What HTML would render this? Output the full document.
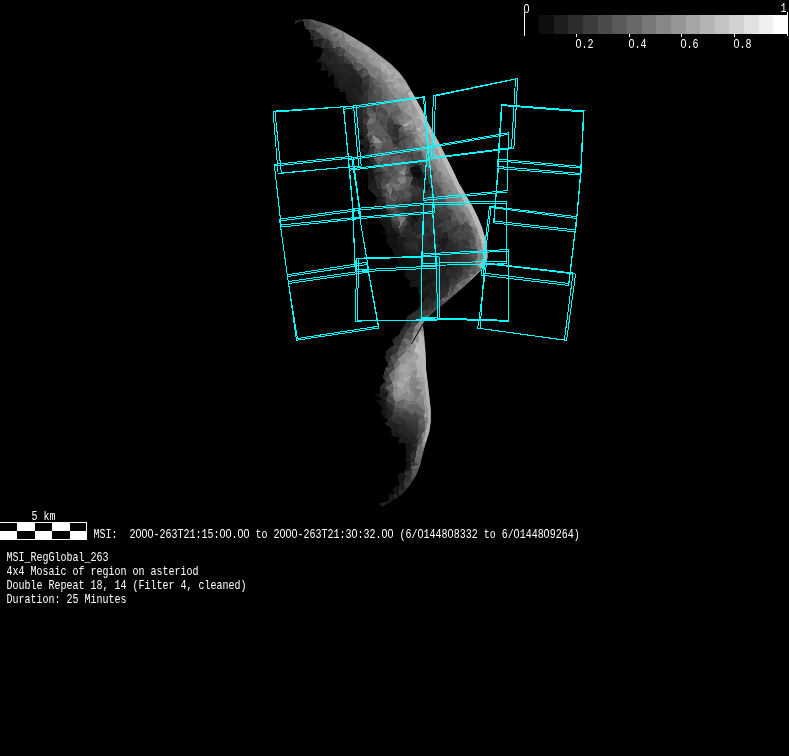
<!DOCTYPE html>
<html><head><meta charset="utf-8"><title>MSI_RegGlobal_263</title>
<style>
html,body{margin:0;padding:0;background:#000;}
body{width:789px;height:756px;overflow:hidden;position:relative;}
svg{position:absolute;left:0;top:0;}
.t{position:absolute;color:#fff;font-family:"Liberation Mono",monospace;font-size:10px;line-height:10px;white-space:pre;transform:scale(1,1.32);transform-origin:0 100%;letter-spacing:0;filter:grayscale(1) brightness(1.35);}
.z{font-family:"Liberation Sans",sans-serif;display:inline-block;width:6px;text-align:center;transform:translateX(-0.4px) scaleX(1.08);}
</style></head><body>

<svg width="789" height="756" viewBox="0 0 789 756">
<defs><clipPath id="ast"><polygon points="295.3,20.3 302.7,19.2 312.2,19.5 321.7,22.2 332.3,25.9 342.9,31.2 353.5,37.5 364.1,43.9 370.0,47.8 380.6,55.9 391.2,64.3 399.6,72.8 406.0,81.3 411.3,90.8 416.6,100.3 421.9,109.8 428.0,122.7 434.3,134.3 440.7,146.0 447.0,158.7 453.4,171.4 458.7,183.0 466.0,195.6 472.3,206.2 477.6,216.7 481.9,227.3 485.0,237.9 487.1,248.5 487.6,257.0 486.5,262.0 482.7,268.8 475.3,276.2 465.0,285.7 455.2,294.2 446.7,301.6 436.2,310.0 425.6,319.6 422.8,324.8 423.7,330.0 424.7,342.3 425.8,358.2 426.1,370.0 427.7,382.7 429.3,396.5 430.8,410.2 430.8,420.8 429.3,431.4 426.1,442.0 422.5,455.0 420.3,465.0 416.2,475.0 410.2,485.0 401.5,495.0 385.0,505.0 383.0,507.0 376.3,503.0 386.6,495.0 392.5,485.0 395.0,475.0 399.4,465.0 401.6,455.0 401.2,445.0 388.0,435.0 382.3,425.0 376.9,415.0 374.2,405.0 373.5,395.0 378.5,385.0 380.3,375.0 379.7,365.0 381.5,355.0 388.5,345.0 392.5,335.0 398.6,325.0 405.7,315.0 419.1,305.0 416.0,295.0 408.5,285.0 401.0,275.0 394.5,265.0 389.6,255.0 383.7,245.0 380.6,235.0 378.3,225.0 375.8,215.0 371.5,205.0 368.3,195.0 363.4,185.0 363.5,180.0 360.6,170.0 359.1,160.0 356.8,150.0 355.1,140.0 353.2,130.0 351.5,120.0 346.8,110.0 344.8,100.0 330.3,90.0 328.0,80.0 319.9,70.0 312.4,60.0 316.3,50.0 307.3,40.0 301.7,30.0 291.1,20.0 293.0,19.0"/></clipPath></defs>
<g clip-path="url(#ast)" shape-rendering="crispEdges">
<polygon points="320.6,11.6 320.5,17.8 313.2,14.8" fill="#5e5e5e"/>
<polygon points="294.7,15.8 301.4,14.2 303.1,20.3" fill="#232323"/>
<polygon points="294.7,15.8 303.1,20.3 294.7,24.2" fill="#252525"/>
<polygon points="301.4,14.2 306.9,17.3 303.1,20.3" fill="#3d3d3d"/>
<polygon points="306.9,17.3 309.2,19.7 303.1,20.3" fill="#494949"/>
<polygon points="306.9,17.3 313.2,14.8 309.2,19.7" fill="#535353"/>
<polygon points="313.2,14.8 315.1,24.3 309.2,19.7" fill="#5b5b5b"/>
<polygon points="313.2,14.8 320.5,17.8 322.7,22.9" fill="#525252"/>
<polygon points="313.2,14.8 322.7,22.9 315.1,24.3" fill="#575757"/>
<polygon points="303.1,20.3 309.2,19.7 305.3,28.7" fill="#383838"/>
<polygon points="309.2,19.7 309.1,30.1 305.3,28.7" fill="#343434"/>
<polygon points="309.2,19.7 315.1,24.3 309.1,30.1" fill="#444444"/>
<polygon points="315.1,24.3 314.7,29.8 309.1,30.1" fill="#444444"/>
<polygon points="315.1,24.3 322.7,22.9 322.6,26.6" fill="#575757"/>
<polygon points="315.1,24.3 322.6,26.6 314.7,29.8" fill="#494949"/>
<polygon points="322.7,22.9 325.9,21.4 322.6,26.6" fill="#6b6b6b"/>
<polygon points="325.9,21.4 325.8,27.0 322.6,26.6" fill="#676767"/>
<polygon points="325.9,21.4 331.4,23.3 325.8,27.0" fill="#707070"/>
<polygon points="331.4,23.3 331.8,28.4 325.8,27.0" fill="#6e6e6e"/>
<polygon points="331.4,23.3 339.2,23.3 331.8,28.4" fill="#6b6b6b"/>
<polygon points="339.2,23.3 337.8,27.6 331.8,28.4" fill="#777777"/>
<polygon points="309.1,30.1 314.7,29.8 313.7,36.2" fill="#292929"/>
<polygon points="309.1,30.1 313.7,36.2 310.8,36.2" fill="#2b2b2b"/>
<polygon points="314.7,29.8 322.6,26.6 320.5,33.9" fill="#616161"/>
<polygon points="314.7,29.8 320.5,33.9 313.7,36.2" fill="#323232"/>
<polygon points="322.6,26.6 325.8,27.0 320.5,33.9" fill="#5c5c5c"/>
<polygon points="325.8,27.0 329.4,35.6 320.5,33.9" fill="#5e5e5e"/>
<polygon points="325.8,27.0 331.8,28.4 329.4,35.6" fill="#686868"/>
<polygon points="331.8,28.4 331.4,33.7 329.4,35.6" fill="#707070"/>
<polygon points="331.8,28.4 337.8,27.6 331.4,33.7" fill="#7f7f7f"/>
<polygon points="337.8,27.6 339.1,33.2 331.4,33.7" fill="#878787"/>
<polygon points="337.8,27.6 343.2,30.0 343.5,33.1" fill="#8d8d8d"/>
<polygon points="337.8,27.6 343.5,33.1 339.1,33.2" fill="#818181"/>
<polygon points="343.2,30.0 350.3,27.8 343.5,33.1" fill="#868686"/>
<polygon points="350.3,27.8 352.1,31.7 343.5,33.1" fill="#8f8f8f"/>
<polygon points="310.8,36.2 313.7,36.2 310.1,40.2" fill="#1d1d1d"/>
<polygon points="313.7,36.2 313.5,39.9 310.1,40.2" fill="#1c1c1c"/>
<polygon points="313.7,36.2 320.5,33.9 313.5,39.9" fill="#2f2f2f"/>
<polygon points="320.5,33.9 323.1,38.1 313.5,39.9" fill="#373737"/>
<polygon points="320.5,33.9 329.4,35.6 328.5,39.7" fill="#585858"/>
<polygon points="320.5,33.9 328.5,39.7 323.1,38.1" fill="#4b4b4b"/>
<polygon points="329.4,35.6 331.4,33.7 333.0,41.6" fill="#6a6a6a"/>
<polygon points="329.4,35.6 333.0,41.6 328.5,39.7" fill="#5d5d5d"/>
<polygon points="331.4,33.7 339.1,33.2 333.0,41.6" fill="#676767"/>
<polygon points="339.1,33.2 338.5,40.0 333.0,41.6" fill="#777777"/>
<polygon points="339.1,33.2 343.5,33.1 338.5,40.0" fill="#888888"/>
<polygon points="343.5,33.1 345.9,42.3 338.5,40.0" fill="#787878"/>
<polygon points="343.5,33.1 352.1,31.7 345.9,42.3" fill="#909090"/>
<polygon points="352.1,31.7 350.2,41.6 345.9,42.3" fill="#959595"/>
<polygon points="352.1,31.7 357.3,33.7 358.0,40.7" fill="#909090"/>
<polygon points="352.1,31.7 358.0,40.7 350.2,41.6" fill="#9b9b9b"/>
<polygon points="357.3,33.7 362.5,39.3 358.0,40.7" fill="#9c9c9c"/>
<polygon points="313.5,39.9 323.1,38.1 313.3,46.1" fill="#1d1d1d"/>
<polygon points="323.1,38.1 321.0,47.6 313.3,46.1" fill="#1f1f1f"/>
<polygon points="323.1,38.1 328.5,39.7 321.0,47.6" fill="#363636"/>
<polygon points="328.5,39.7 328.5,47.6 321.0,47.6" fill="#2c2c2c"/>
<polygon points="328.5,39.7 333.0,41.6 333.4,47.9" fill="#494949"/>
<polygon points="328.5,39.7 333.4,47.9 328.5,47.6" fill="#363636"/>
<polygon points="333.0,41.6 338.5,40.0 333.4,47.9" fill="#626262"/>
<polygon points="338.5,40.0 339.9,46.9 333.4,47.9" fill="#5f5f5f"/>
<polygon points="338.5,40.0 345.9,42.3 339.9,46.9" fill="#717171"/>
<polygon points="345.9,42.3 343.7,43.7 339.9,46.9" fill="#727272"/>
<polygon points="345.9,42.3 350.2,41.6 343.7,43.7" fill="#808080"/>
<polygon points="350.2,41.6 349.2,45.3 343.7,43.7" fill="#7f7f7f"/>
<polygon points="350.2,41.6 358.0,40.7 349.2,45.3" fill="#909090"/>
<polygon points="358.0,40.7 355.1,47.6 349.2,45.3" fill="#919191"/>
<polygon points="358.0,40.7 362.5,39.3 355.1,47.6" fill="#909090"/>
<polygon points="362.5,39.3 363.3,46.6 355.1,47.6" fill="#989898"/>
<polygon points="362.5,39.3 366.9,38.2 369.6,46.9" fill="#979797"/>
<polygon points="362.5,39.3 369.6,46.9 363.3,46.6" fill="#9b9b9b"/>
<polygon points="366.9,38.2 374.9,43.6 369.6,46.9" fill="#969696"/>
<polygon points="321.0,47.6 328.5,47.6 323.2,50.2" fill="#1e1e1e"/>
<polygon points="328.5,47.6 328.5,52.0 323.2,50.2" fill="#202020"/>
<polygon points="328.5,47.6 333.4,47.9 334.9,53.0" fill="#2f2f2f"/>
<polygon points="328.5,47.6 334.9,53.0 328.5,52.0" fill="#2c2c2c"/>
<polygon points="333.4,47.9 339.9,46.9 334.9,53.0" fill="#3a3a3a"/>
<polygon points="339.9,46.9 337.7,53.9 334.9,53.0" fill="#343434"/>
<polygon points="339.9,46.9 343.7,43.7 344.9,49.7" fill="#717171"/>
<polygon points="339.9,46.9 344.9,49.7 337.7,53.9" fill="#494949"/>
<polygon points="343.7,43.7 349.2,45.3 344.9,49.7" fill="#737373"/>
<polygon points="349.2,45.3 348.6,52.0 344.9,49.7" fill="#6f6f6f"/>
<polygon points="349.2,45.3 355.1,47.6 348.6,52.0" fill="#7b7b7b"/>
<polygon points="355.1,47.6 356.8,51.0 348.6,52.0" fill="#767676"/>
<polygon points="355.1,47.6 363.3,46.6 361.3,51.3" fill="#919191"/>
<polygon points="355.1,47.6 361.3,51.3 356.8,51.0" fill="#818181"/>
<polygon points="363.3,46.6 369.6,46.9 368.1,53.6" fill="#a5a5a5"/>
<polygon points="363.3,46.6 368.1,53.6 361.3,51.3" fill="#9b9b9b"/>
<polygon points="369.6,46.9 374.9,43.6 372.6,53.2" fill="#959595"/>
<polygon points="369.6,46.9 372.6,53.2 368.1,53.6" fill="#999999"/>
<polygon points="374.9,43.6 382.4,47.2 372.6,53.2" fill="#979797"/>
<polygon points="382.4,47.2 382.6,50.2 372.6,53.2" fill="#9a9a9a"/>
<polygon points="323.2,50.2 328.5,52.0 329.0,60.4" fill="#1f1f1f"/>
<polygon points="323.2,50.2 329.0,60.4 321.0,56.7" fill="#242424"/>
<polygon points="328.5,52.0 334.9,53.0 332.8,56.3" fill="#212121"/>
<polygon points="328.5,52.0 332.8,56.3 329.0,60.4" fill="#202020"/>
<polygon points="334.9,53.0 337.7,53.9 337.5,56.0" fill="#313131"/>
<polygon points="334.9,53.0 337.5,56.0 332.8,56.3" fill="#282828"/>
<polygon points="337.7,53.9 344.9,49.7 337.5,56.0" fill="#3b3b3b"/>
<polygon points="344.9,49.7 344.2,56.0 337.5,56.0" fill="#444444"/>
<polygon points="344.9,49.7 348.6,52.0 349.7,56.8" fill="#676767"/>
<polygon points="344.9,49.7 349.7,56.8 344.2,56.0" fill="#5c5c5c"/>
<polygon points="348.6,52.0 356.8,51.0 357.3,59.9" fill="#7b7b7b"/>
<polygon points="348.6,52.0 357.3,59.9 349.7,56.8" fill="#616161"/>
<polygon points="356.8,51.0 361.3,51.3 357.3,59.9" fill="#7e7e7e"/>
<polygon points="361.3,51.3 364.2,57.6 357.3,59.9" fill="#858585"/>
<polygon points="361.3,51.3 368.1,53.6 368.6,58.1" fill="#8d8d8d"/>
<polygon points="361.3,51.3 368.6,58.1 364.2,57.6" fill="#858585"/>
<polygon points="368.1,53.6 372.6,53.2 368.6,58.1" fill="#989898"/>
<polygon points="372.6,53.2 374.4,57.2 368.6,58.1" fill="#a2a2a2"/>
<polygon points="372.6,53.2 382.6,50.2 378.9,56.9" fill="#a0a0a0"/>
<polygon points="372.6,53.2 378.9,56.9 374.4,57.2" fill="#9c9c9c"/>
<polygon points="382.6,50.2 389.2,56.2 378.9,56.9" fill="#9d9d9d"/>
<polygon points="321.0,56.7 321.5,61.7 314.5,62.7" fill="#171717"/>
<polygon points="321.0,56.7 329.0,60.4 321.5,61.7" fill="#202020"/>
<polygon points="329.0,60.4 326.0,63.8 321.5,61.7" fill="#1c1c1c"/>
<polygon points="329.0,60.4 332.8,56.3 326.0,63.8" fill="#292929"/>
<polygon points="332.8,56.3 335.2,64.7 326.0,63.8" fill="#262626"/>
<polygon points="332.8,56.3 337.5,56.0 340.8,63.9" fill="#282828"/>
<polygon points="332.8,56.3 340.8,63.9 335.2,64.7" fill="#252525"/>
<polygon points="337.5,56.0 344.2,56.0 340.8,63.9" fill="#2f2f2f"/>
<polygon points="344.2,56.0 343.7,62.8 340.8,63.9" fill="#303030"/>
<polygon points="344.2,56.0 349.7,56.8 353.2,65.0" fill="#555555"/>
<polygon points="344.2,56.0 353.2,65.0 343.7,62.8" fill="#3d3d3d"/>
<polygon points="349.7,56.8 357.3,59.9 356.1,61.7" fill="#5d5d5d"/>
<polygon points="349.7,56.8 356.1,61.7 353.2,65.0" fill="#5d5d5d"/>
<polygon points="357.3,59.9 364.2,57.6 356.1,61.7" fill="#757575"/>
<polygon points="364.2,57.6 363.0,64.8 356.1,61.7" fill="#777777"/>
<polygon points="364.2,57.6 368.6,58.1 368.6,62.8" fill="#8a8a8a"/>
<polygon points="364.2,57.6 368.6,62.8 363.0,64.8" fill="#797979"/>
<polygon points="368.6,58.1 374.4,57.2 368.6,62.8" fill="#8c8c8c"/>
<polygon points="374.4,57.2 375.8,66.0 368.6,62.8" fill="#969696"/>
<polygon points="374.4,57.2 378.9,56.9 379.7,61.8" fill="#9e9e9e"/>
<polygon points="374.4,57.2 379.7,61.8 375.8,66.0" fill="#9e9e9e"/>
<polygon points="378.9,56.9 389.2,56.2 379.7,61.8" fill="#9f9f9f"/>
<polygon points="389.2,56.2 386.2,63.6 379.7,61.8" fill="#9f9f9f"/>
<polygon points="389.2,56.2 393.0,58.6 386.2,63.6" fill="#ababab"/>
<polygon points="393.0,58.6 393.9,62.6 386.2,63.6" fill="#a8a8a8"/>
<polygon points="393.0,58.6 400.4,65.1 393.9,62.6" fill="#b1b1b1"/>
<polygon points="321.5,61.7 326.0,63.8 328.5,69.7" fill="#161616"/>
<polygon points="321.5,61.7 328.5,69.7 320.3,71.5" fill="#161616"/>
<polygon points="326.0,63.8 335.2,64.7 330.8,69.9" fill="#1f1f1f"/>
<polygon points="326.0,63.8 330.8,69.9 328.5,69.7" fill="#171717"/>
<polygon points="335.2,64.7 340.8,63.9 338.4,72.0" fill="#232323"/>
<polygon points="335.2,64.7 338.4,72.0 330.8,69.9" fill="#232323"/>
<polygon points="340.8,63.9 343.7,62.8 338.4,72.0" fill="#252525"/>
<polygon points="343.7,62.8 343.5,69.3 338.4,72.0" fill="#242424"/>
<polygon points="343.7,62.8 353.2,65.0 343.5,69.3" fill="#232323"/>
<polygon points="353.2,65.0 352.9,67.7 343.5,69.3" fill="#252525"/>
<polygon points="353.2,65.0 356.1,61.7 352.9,67.7" fill="#4e4e4e"/>
<polygon points="356.1,61.7 356.6,71.5 352.9,67.7" fill="#494949"/>
<polygon points="356.1,61.7 363.0,64.8 356.6,71.5" fill="#5a5a5a"/>
<polygon points="363.0,64.8 364.3,67.8 356.6,71.5" fill="#616161"/>
<polygon points="363.0,64.8 368.6,62.8 364.3,67.8" fill="#727272"/>
<polygon points="368.6,62.8 366.8,67.9 364.3,67.8" fill="#767676"/>
<polygon points="368.6,62.8 375.8,66.0 377.0,68.8" fill="#8b8b8b"/>
<polygon points="368.6,62.8 377.0,68.8 366.8,67.9" fill="#7d7d7d"/>
<polygon points="375.8,66.0 379.7,61.8 382.2,71.9" fill="#9b9b9b"/>
<polygon points="375.8,66.0 382.2,71.9 377.0,68.8" fill="#747474"/>
<polygon points="379.7,61.8 386.2,63.6 382.2,71.9" fill="#acacac"/>
<polygon points="386.2,63.6 386.2,68.9 382.2,71.9" fill="#adadad"/>
<polygon points="386.2,63.6 393.9,62.6 386.2,68.9" fill="#a3a3a3"/>
<polygon points="393.9,62.6 395.2,70.6 386.2,68.9" fill="#9f9f9f"/>
<polygon points="393.9,62.6 400.4,65.1 395.2,70.6" fill="#acacac"/>
<polygon points="400.4,65.1 397.9,71.0 395.2,70.6" fill="#a4a4a4"/>
<polygon points="400.4,65.1 404.1,68.9 397.9,71.0" fill="#9f9f9f"/>
<polygon points="328.5,69.7 330.8,69.9 328.2,77.7" fill="#151515"/>
<polygon points="330.8,69.9 333.8,74.2 328.2,77.7" fill="#151515"/>
<polygon points="330.8,69.9 338.4,72.0 333.8,74.2" fill="#1d1d1d"/>
<polygon points="338.4,72.0 340.6,75.0 333.8,74.2" fill="#212121"/>
<polygon points="338.4,72.0 343.5,69.3 345.3,75.4" fill="#252525"/>
<polygon points="338.4,72.0 345.3,75.4 340.6,75.0" fill="#202020"/>
<polygon points="343.5,69.3 352.9,67.7 352.1,74.6" fill="#242424"/>
<polygon points="343.5,69.3 352.1,74.6 345.3,75.4" fill="#232323"/>
<polygon points="352.9,67.7 356.6,71.5 352.1,74.6" fill="#242424"/>
<polygon points="356.6,71.5 355.8,74.8 352.1,74.6" fill="#242424"/>
<polygon points="356.6,71.5 364.3,67.8 361.3,77.8" fill="#3d3d3d"/>
<polygon points="356.6,71.5 361.3,77.8 355.8,74.8" fill="#242424"/>
<polygon points="364.3,67.8 366.8,67.9 361.3,77.8" fill="#565656"/>
<polygon points="366.8,67.9 369.4,75.2 361.3,77.8" fill="#555555"/>
<polygon points="366.8,67.9 377.0,68.8 369.4,75.2" fill="#797979"/>
<polygon points="377.0,68.8 374.5,78.4 369.4,75.2" fill="#7a7a7a"/>
<polygon points="377.0,68.8 382.2,71.9 374.5,78.4" fill="#848484"/>
<polygon points="382.2,71.9 381.0,74.7 374.5,78.4" fill="#7d7d7d"/>
<polygon points="382.2,71.9 386.2,68.9 388.5,76.7" fill="#9c9c9c"/>
<polygon points="382.2,71.9 388.5,76.7 381.0,74.7" fill="#8b8b8b"/>
<polygon points="386.2,68.9 395.2,70.6 388.5,76.7" fill="#ababab"/>
<polygon points="395.2,70.6 395.4,74.1 388.5,76.7" fill="#a1a1a1"/>
<polygon points="395.2,70.6 397.9,71.0 395.4,74.1" fill="#a6a6a6"/>
<polygon points="397.9,71.0 398.9,77.5 395.4,74.1" fill="#adadad"/>
<polygon points="397.9,71.0 404.1,68.9 406.6,78.0" fill="#b0b0b0"/>
<polygon points="397.9,71.0 406.6,78.0 398.9,77.5" fill="#aaaaaa"/>
<polygon points="404.1,68.9 408.6,71.2 408.8,75.0" fill="#a8a8a8"/>
<polygon points="404.1,68.9 408.8,75.0 406.6,78.0" fill="#adadad"/>
<polygon points="333.8,74.2 340.6,75.0 334.7,84.4" fill="#1a1a1a"/>
<polygon points="340.6,75.0 338.3,80.5 334.7,84.4" fill="#1a1a1a"/>
<polygon points="340.6,75.0 345.3,75.4 346.1,80.6" fill="#212121"/>
<polygon points="340.6,75.0 346.1,80.6 338.3,80.5" fill="#1f1f1f"/>
<polygon points="345.3,75.4 352.1,74.6 346.1,80.6" fill="#232323"/>
<polygon points="352.1,74.6 348.6,83.9 346.1,80.6" fill="#212121"/>
<polygon points="352.1,74.6 355.8,74.8 348.6,83.9" fill="#1e1e1e"/>
<polygon points="355.8,74.8 356.6,83.5 348.6,83.9" fill="#1e1e1e"/>
<polygon points="355.8,74.8 361.3,77.8 362.5,83.8" fill="#1e1e1e"/>
<polygon points="355.8,74.8 362.5,83.8 356.6,83.5" fill="#202020"/>
<polygon points="361.3,77.8 369.4,75.2 362.5,83.8" fill="#353535"/>
<polygon points="369.4,75.2 368.8,80.4 362.5,83.8" fill="#3f3f3f"/>
<polygon points="369.4,75.2 374.5,78.4 372.7,82.2" fill="#575757"/>
<polygon points="369.4,75.2 372.7,82.2 368.8,80.4" fill="#484848"/>
<polygon points="374.5,78.4 381.0,74.7 381.7,84.0" fill="#717171"/>
<polygon points="374.5,78.4 381.7,84.0 372.7,82.2" fill="#656565"/>
<polygon points="381.0,74.7 388.5,76.7 385.0,82.6" fill="#8b8b8b"/>
<polygon points="381.0,74.7 385.0,82.6 381.7,84.0" fill="#7c7c7c"/>
<polygon points="388.5,76.7 395.4,74.1 385.0,82.6" fill="#999999"/>
<polygon points="395.4,74.1 392.4,82.0 385.0,82.6" fill="#a2a2a2"/>
<polygon points="395.4,74.1 398.9,77.5 392.4,82.0" fill="#a9a9a9"/>
<polygon points="398.9,77.5 397.3,81.0 392.4,82.0" fill="#a3a3a3"/>
<polygon points="398.9,77.5 406.6,78.0 405.1,84.0" fill="#9f9f9f"/>
<polygon points="398.9,77.5 405.1,84.0 397.3,81.0" fill="#989898"/>
<polygon points="406.6,78.0 408.8,75.0 409.1,82.0" fill="#a7a7a7"/>
<polygon points="406.6,78.0 409.1,82.0 405.1,84.0" fill="#9c9c9c"/>
<polygon points="408.8,75.0 415.2,74.5 409.1,82.0" fill="#aeaeae"/>
<polygon points="334.7,84.4 338.3,80.5 340.3,89.3" fill="#151515"/>
<polygon points="334.7,84.4 340.3,89.3 332.9,86.7" fill="#141414"/>
<polygon points="338.3,80.5 346.1,80.6 340.3,89.3" fill="#212121"/>
<polygon points="346.1,80.6 344.8,86.5 340.3,89.3" fill="#1d1d1d"/>
<polygon points="346.1,80.6 348.6,83.9 350.9,86.1" fill="#212121"/>
<polygon points="346.1,80.6 350.9,86.1 344.8,86.5" fill="#1f1f1f"/>
<polygon points="348.6,83.9 356.6,83.5 350.9,86.1" fill="#1d1d1d"/>
<polygon points="356.6,83.5 355.2,87.7 350.9,86.1" fill="#1c1c1c"/>
<polygon points="356.6,83.5 362.5,83.8 355.2,87.7" fill="#1d1d1d"/>
<polygon points="362.5,83.8 361.0,87.7 355.2,87.7" fill="#1f1f1f"/>
<polygon points="362.5,83.8 368.8,80.4 369.0,85.8" fill="#363636"/>
<polygon points="362.5,83.8 369.0,85.8 361.0,87.7" fill="#2d2d2d"/>
<polygon points="368.8,80.4 372.7,82.2 369.0,85.8" fill="#4a4a4a"/>
<polygon points="372.7,82.2 375.7,86.0 369.0,85.8" fill="#4c4c4c"/>
<polygon points="372.7,82.2 381.7,84.0 375.7,86.0" fill="#5c5c5c"/>
<polygon points="381.7,84.0 382.1,89.3 375.7,86.0" fill="#6d6d6d"/>
<polygon points="381.7,84.0 385.0,82.6 382.1,89.3" fill="#737373"/>
<polygon points="385.0,82.6 387.1,85.9 382.1,89.3" fill="#787878"/>
<polygon points="385.0,82.6 392.4,82.0 387.1,85.9" fill="#848484"/>
<polygon points="392.4,82.0 393.0,87.4 387.1,85.9" fill="#949494"/>
<polygon points="392.4,82.0 397.3,81.0 393.0,87.4" fill="#969696"/>
<polygon points="397.3,81.0 401.2,86.3 393.0,87.4" fill="#ababab"/>
<polygon points="397.3,81.0 405.1,84.0 406.7,90.4" fill="#a6a6a6"/>
<polygon points="397.3,81.0 406.7,90.4 401.2,86.3" fill="#9e9e9e"/>
<polygon points="405.1,84.0 409.1,82.0 412.1,89.5" fill="#989898"/>
<polygon points="405.1,84.0 412.1,89.5 406.7,90.4" fill="#acacac"/>
<polygon points="409.1,82.0 418.5,84.2 412.1,89.5" fill="#a0a0a0"/>
<polygon points="418.5,84.2 415.5,90.3 412.1,89.5" fill="#a7a7a7"/>
<polygon points="340.3,89.3 344.8,86.5 346.2,91.8" fill="#1b1b1b"/>
<polygon points="340.3,89.3 346.2,91.8 338.7,92.4" fill="#161616"/>
<polygon points="344.8,86.5 350.9,86.1 346.2,91.8" fill="#1c1c1c"/>
<polygon points="350.9,86.1 352.5,92.8 346.2,91.8" fill="#1c1c1c"/>
<polygon points="350.9,86.1 355.2,87.7 352.5,92.8" fill="#1f1f1f"/>
<polygon points="355.2,87.7 357.7,96.3 352.5,92.8" fill="#212121"/>
<polygon points="355.2,87.7 361.0,87.7 363.4,94.8" fill="#1b1b1b"/>
<polygon points="355.2,87.7 363.4,94.8 357.7,96.3" fill="#222222"/>
<polygon points="361.0,87.7 369.0,85.8 363.4,94.8" fill="#2a2a2a"/>
<polygon points="369.0,85.8 368.1,91.6 363.4,94.8" fill="#303030"/>
<polygon points="369.0,85.8 375.7,86.0 372.8,92.3" fill="#484848"/>
<polygon points="369.0,85.8 372.8,92.3 368.1,91.6" fill="#424242"/>
<polygon points="375.7,86.0 382.1,89.3 372.8,92.3" fill="#595959"/>
<polygon points="382.1,89.3 381.6,93.7 372.8,92.3" fill="#5a5a5a"/>
<polygon points="382.1,89.3 387.1,85.9 381.6,93.7" fill="#6d6d6d"/>
<polygon points="387.1,85.9 387.1,95.9 381.6,93.7" fill="#6e6e6e"/>
<polygon points="387.1,85.9 393.0,87.4 391.2,92.7" fill="#929292"/>
<polygon points="387.1,85.9 391.2,92.7 387.1,95.9" fill="#797979"/>
<polygon points="393.0,87.4 401.2,86.3 399.7,91.7" fill="#9f9f9f"/>
<polygon points="393.0,87.4 399.7,91.7 391.2,92.7" fill="#8b8b8b"/>
<polygon points="401.2,86.3 406.7,90.4 402.6,93.3" fill="#a4a4a4"/>
<polygon points="401.2,86.3 402.6,93.3 399.7,91.7" fill="#9b9b9b"/>
<polygon points="406.7,90.4 412.1,89.5 402.6,93.3" fill="#989898"/>
<polygon points="412.1,89.5 409.1,93.3 402.6,93.3" fill="#959595"/>
<polygon points="412.1,89.5 415.5,90.3 409.1,93.3" fill="#9e9e9e"/>
<polygon points="415.5,90.3 415.7,94.4 409.1,93.3" fill="#a7a7a7"/>
<polygon points="415.5,90.3 423.4,92.6 415.7,94.4" fill="#a3a3a3"/>
<polygon points="346.2,91.8 352.5,92.8 352.2,99.8" fill="#1c1c1c"/>
<polygon points="346.2,91.8 352.2,99.8 346.2,99.8" fill="#191919"/>
<polygon points="352.5,92.8 357.7,96.3 352.2,99.8" fill="#1e1e1e"/>
<polygon points="357.7,96.3 355.7,98.1 352.2,99.8" fill="#1b1b1b"/>
<polygon points="357.7,96.3 363.4,94.8 361.7,97.8" fill="#282828"/>
<polygon points="357.7,96.3 361.7,97.8 355.7,98.1" fill="#212121"/>
<polygon points="363.4,94.8 368.1,91.6 368.2,101.2" fill="#313131"/>
<polygon points="363.4,94.8 368.2,101.2 361.7,97.8" fill="#2d2d2d"/>
<polygon points="368.1,91.6 372.8,92.3 368.2,101.2" fill="#414141"/>
<polygon points="372.8,92.3 375.9,101.7 368.2,101.2" fill="#494949"/>
<polygon points="372.8,92.3 381.6,93.7 382.0,98.9" fill="#545454"/>
<polygon points="372.8,92.3 382.0,98.9 375.9,101.7" fill="#4e4e4e"/>
<polygon points="381.6,93.7 387.1,95.9 387.3,99.7" fill="#646464"/>
<polygon points="381.6,93.7 387.3,99.7 382.0,98.9" fill="#666666"/>
<polygon points="387.1,95.9 391.2,92.7 387.3,99.7" fill="#6d6d6d"/>
<polygon points="391.2,92.7 394.4,100.1 387.3,99.7" fill="#7c7c7c"/>
<polygon points="391.2,92.7 399.7,91.7 397.9,100.7" fill="#919191"/>
<polygon points="391.2,92.7 397.9,100.7 394.4,100.1" fill="#797979"/>
<polygon points="399.7,91.7 402.6,93.3 397.9,100.7" fill="#939393"/>
<polygon points="402.6,93.3 407.2,98.6 397.9,100.7" fill="#8d8d8d"/>
<polygon points="402.6,93.3 409.1,93.3 407.2,98.6" fill="#919191"/>
<polygon points="409.1,93.3 412.8,97.7 407.2,98.6" fill="#969696"/>
<polygon points="409.1,93.3 415.7,94.4 415.8,98.7" fill="#a5a5a5"/>
<polygon points="409.1,93.3 415.8,98.7 412.8,97.7" fill="#9c9c9c"/>
<polygon points="415.7,94.4 423.4,92.6 424.2,102.1" fill="#989898"/>
<polygon points="415.7,94.4 424.2,102.1 415.8,98.7" fill="#9f9f9f"/>
<polygon points="346.2,99.8 352.2,99.8 352.7,107.5" fill="#181818"/>
<polygon points="352.2,99.8 355.7,98.1 352.7,107.5" fill="#1b1b1b"/>
<polygon points="355.7,98.1 357.6,107.6 352.7,107.5" fill="#1d1d1d"/>
<polygon points="355.7,98.1 361.7,97.8 363.6,105.0" fill="#272727"/>
<polygon points="355.7,98.1 363.6,105.0 357.6,107.6" fill="#1f1f1f"/>
<polygon points="361.7,97.8 368.2,101.2 363.6,105.0" fill="#2f2f2f"/>
<polygon points="368.2,101.2 367.1,104.1 363.6,105.0" fill="#353535"/>
<polygon points="368.2,101.2 375.9,101.7 367.1,104.1" fill="#3d3d3d"/>
<polygon points="375.9,101.7 376.2,104.6 367.1,104.1" fill="#434343"/>
<polygon points="375.9,101.7 382.0,98.9 380.1,105.6" fill="#5d5d5d"/>
<polygon points="375.9,101.7 380.1,105.6 376.2,104.6" fill="#585858"/>
<polygon points="382.0,98.9 387.3,99.7 380.1,105.6" fill="#5d5d5d"/>
<polygon points="387.3,99.7 384.7,104.8 380.1,105.6" fill="#686868"/>
<polygon points="387.3,99.7 394.4,100.1 392.0,107.0" fill="#6a6a6a"/>
<polygon points="387.3,99.7 392.0,107.0 384.7,104.8" fill="#606060"/>
<polygon points="394.4,100.1 397.9,100.7 392.0,107.0" fill="#727272"/>
<polygon points="397.9,100.7 398.4,105.1 392.0,107.0" fill="#777777"/>
<polygon points="397.9,100.7 407.2,98.6 398.4,105.1" fill="#888888"/>
<polygon points="407.2,98.6 407.2,106.0 398.4,105.1" fill="#979797"/>
<polygon points="407.2,98.6 412.8,97.7 407.2,106.0" fill="#a6a6a6"/>
<polygon points="412.8,97.7 412.7,106.6 407.2,106.0" fill="#adadad"/>
<polygon points="412.8,97.7 415.8,98.7 414.7,105.6" fill="#a4a4a4"/>
<polygon points="412.8,97.7 414.7,105.6 412.7,106.6" fill="#9f9f9f"/>
<polygon points="415.8,98.7 424.2,102.1 422.7,107.3" fill="#a1a1a1"/>
<polygon points="415.8,98.7 422.7,107.3 414.7,105.6" fill="#b4b4b4"/>
<polygon points="424.2,102.1 428.3,107.0 422.7,107.3" fill="#a9a9a9"/>
<polygon points="352.7,107.5 357.6,107.6 351.2,113.2" fill="#222222"/>
<polygon points="357.6,107.6 358.2,112.7 351.2,113.2" fill="#1d1d1d"/>
<polygon points="357.6,107.6 363.6,105.0 358.2,112.7" fill="#272727"/>
<polygon points="363.6,105.0 362.3,111.2 358.2,112.7" fill="#292929"/>
<polygon points="363.6,105.0 367.1,104.1 367.3,113.6" fill="#3e3e3e"/>
<polygon points="363.6,105.0 367.3,113.6 362.3,111.2" fill="#363636"/>
<polygon points="367.1,104.1 376.2,104.6 375.8,113.2" fill="#404040"/>
<polygon points="367.1,104.1 375.8,113.2 367.3,113.6" fill="#555555"/>
<polygon points="376.2,104.6 380.1,105.6 375.8,113.2" fill="#595959"/>
<polygon points="380.1,105.6 379.4,111.7 375.8,113.2" fill="#444444"/>
<polygon points="380.1,105.6 384.7,104.8 388.3,112.4" fill="#646464"/>
<polygon points="380.1,105.6 388.3,112.4 379.4,111.7" fill="#4d4d4d"/>
<polygon points="384.7,104.8 392.0,107.0 391.2,111.8" fill="#696969"/>
<polygon points="384.7,104.8 391.2,111.8 388.3,112.4" fill="#6b6b6b"/>
<polygon points="392.0,107.0 398.4,105.1 391.2,111.8" fill="#676767"/>
<polygon points="398.4,105.1 400.8,110.7 391.2,111.8" fill="#666666"/>
<polygon points="398.4,105.1 407.2,106.0 400.8,110.7" fill="#8c8c8c"/>
<polygon points="407.2,106.0 403.5,111.0 400.8,110.7" fill="#7b7b7b"/>
<polygon points="407.2,106.0 412.7,106.6 412.0,113.6" fill="#b7b7b7"/>
<polygon points="407.2,106.0 412.0,113.6 403.5,111.0" fill="#a1a1a1"/>
<polygon points="412.7,106.6 414.7,105.6 415.3,110.3" fill="#959595"/>
<polygon points="412.7,106.6 415.3,110.3 412.0,113.6" fill="#979797"/>
<polygon points="414.7,105.6 422.7,107.3 415.3,110.3" fill="#9d9d9d"/>
<polygon points="422.7,107.3 421.8,111.2 415.3,110.3" fill="#9a9a9a"/>
<polygon points="422.7,107.3 428.3,107.0 429.1,110.4" fill="#969696"/>
<polygon points="422.7,107.3 429.1,110.4 421.8,111.2" fill="#ababab"/>
<polygon points="428.3,107.0 434.2,110.5 429.1,110.4" fill="#a6a6a6"/>
<polygon points="351.2,113.2 358.2,112.7 357.6,116.8" fill="#212121"/>
<polygon points="358.2,112.7 362.3,111.2 357.6,116.8" fill="#252525"/>
<polygon points="362.3,111.2 362.6,117.8 357.6,116.8" fill="#262626"/>
<polygon points="362.3,111.2 367.3,113.6 369.6,117.6" fill="#3c3c3c"/>
<polygon points="362.3,111.2 369.6,117.6 362.6,117.8" fill="#303030"/>
<polygon points="367.3,113.6 375.8,113.2 369.6,117.6" fill="#636363"/>
<polygon points="375.8,113.2 375.8,120.1 369.6,117.6" fill="#646464"/>
<polygon points="375.8,113.2 379.4,111.7 379.5,118.7" fill="#565656"/>
<polygon points="375.8,113.2 379.5,118.7 375.8,120.1" fill="#494949"/>
<polygon points="379.4,111.7 388.3,112.4 388.3,117.5" fill="#4b4b4b"/>
<polygon points="379.4,111.7 388.3,117.5 379.5,118.7" fill="#565656"/>
<polygon points="388.3,112.4 391.2,111.8 388.3,117.5" fill="#6b6b6b"/>
<polygon points="391.2,111.8 393.0,120.3 388.3,117.5" fill="#535353"/>
<polygon points="391.2,111.8 400.8,110.7 393.0,120.3" fill="#5e5e5e"/>
<polygon points="400.8,110.7 396.8,118.2 393.0,120.3" fill="#6d6d6d"/>
<polygon points="400.8,110.7 403.5,111.0 396.8,118.2" fill="#666666"/>
<polygon points="403.5,111.0 403.4,119.4 396.8,118.2" fill="#737373"/>
<polygon points="403.5,111.0 412.0,113.6 413.1,118.1" fill="#acacac"/>
<polygon points="403.5,111.0 413.1,118.1 403.4,119.4" fill="#7c7c7c"/>
<polygon points="412.0,113.6 415.3,110.3 415.1,118.4" fill="#a0a0a0"/>
<polygon points="412.0,113.6 415.1,118.4 413.1,118.1" fill="#b4b4b4"/>
<polygon points="415.3,110.3 421.8,111.2 415.1,118.4" fill="#bdbdbd"/>
<polygon points="421.8,111.2 423.2,119.0 415.1,118.4" fill="#dddddd"/>
<polygon points="421.8,111.2 429.1,110.4 423.2,119.0" fill="#adadad"/>
<polygon points="429.1,110.4 429.1,118.7 423.2,119.0" fill="#c7c7c7"/>
<polygon points="429.1,110.4 436.6,118.1 429.1,118.7" fill="#b2b2b2"/>
<polygon points="357.6,116.8 362.6,117.8 356.4,122.8" fill="#242424"/>
<polygon points="362.6,117.8 362.6,122.5 356.4,122.8" fill="#232323"/>
<polygon points="362.6,117.8 369.6,117.6 362.6,122.5" fill="#3a3a3a"/>
<polygon points="369.6,117.6 366.6,125.1 362.6,122.5" fill="#424242"/>
<polygon points="369.6,117.6 375.8,120.1 366.6,125.1" fill="#717171"/>
<polygon points="375.8,120.1 373.9,122.8 366.6,125.1" fill="#6e6e6e"/>
<polygon points="375.8,120.1 379.5,118.7 380.0,123.9" fill="#575757"/>
<polygon points="375.8,120.1 380.0,123.9 373.9,122.8" fill="#595959"/>
<polygon points="379.5,118.7 388.3,117.5 386.7,124.7" fill="#505050"/>
<polygon points="379.5,118.7 386.7,124.7 380.0,123.9" fill="#454545"/>
<polygon points="388.3,117.5 393.0,120.3 386.7,124.7" fill="#404040"/>
<polygon points="393.0,120.3 393.8,123.3 386.7,124.7" fill="#393939"/>
<polygon points="393.0,120.3 396.8,118.2 393.8,123.3" fill="#575757"/>
<polygon points="396.8,118.2 401.1,125.7 393.8,123.3" fill="#5d5d5d"/>
<polygon points="396.8,118.2 403.4,119.4 401.1,125.7" fill="#7d7d7d"/>
<polygon points="403.4,119.4 402.9,125.6 401.1,125.7" fill="#6a6a6a"/>
<polygon points="403.4,119.4 413.1,118.1 402.9,125.6" fill="#878787"/>
<polygon points="413.1,118.1 412.9,125.4 402.9,125.6" fill="#aaaaaa"/>
<polygon points="413.1,118.1 415.1,118.4 415.3,125.6" fill="#a8a8a8"/>
<polygon points="413.1,118.1 415.3,125.6 412.9,125.4" fill="#8b8b8b"/>
<polygon points="415.1,118.4 423.2,119.0 423.6,121.7" fill="#cccccc"/>
<polygon points="415.1,118.4 423.6,121.7 415.3,125.6" fill="#b0b0b0"/>
<polygon points="423.2,119.0 429.1,118.7 426.7,126.2" fill="#c8c8c8"/>
<polygon points="423.2,119.0 426.7,126.2 423.6,121.7" fill="#aaaaaa"/>
<polygon points="429.1,118.7 436.6,118.1 435.7,122.8" fill="#c6c6c6"/>
<polygon points="429.1,118.7 435.7,122.8 426.7,126.2" fill="#bebebe"/>
<polygon points="356.4,122.8 362.6,122.5 354.7,130.5" fill="#1e1e1e"/>
<polygon points="362.6,122.5 363.9,132.1 354.7,130.5" fill="#212121"/>
<polygon points="362.6,122.5 366.6,125.1 368.2,132.3" fill="#2a2a2a"/>
<polygon points="362.6,122.5 368.2,132.3 363.9,132.1" fill="#2d2d2d"/>
<polygon points="366.6,125.1 373.9,122.8 368.2,132.3" fill="#595959"/>
<polygon points="373.9,122.8 375.1,129.9 368.2,132.3" fill="#585858"/>
<polygon points="373.9,122.8 380.0,123.9 375.1,129.9" fill="#5d5d5d"/>
<polygon points="380.0,123.9 382.9,127.8 375.1,129.9" fill="#5f5f5f"/>
<polygon points="380.0,123.9 386.7,124.7 388.0,130.6" fill="#535353"/>
<polygon points="380.0,123.9 388.0,130.6 382.9,127.8" fill="#494949"/>
<polygon points="386.7,124.7 393.8,123.3 392.2,131.7" fill="#3a3a3a"/>
<polygon points="386.7,124.7 392.2,131.7 388.0,130.6" fill="#363636"/>
<polygon points="393.8,123.3 401.1,125.7 398.4,129.9" fill="#303030"/>
<polygon points="393.8,123.3 398.4,129.9 392.2,131.7" fill="#2d2d2d"/>
<polygon points="401.1,125.7 402.9,125.6 405.1,131.3" fill="#5e5e5e"/>
<polygon points="401.1,125.7 405.1,131.3 398.4,129.9" fill="#5f5f5f"/>
<polygon points="402.9,125.6 412.9,125.4 409.6,129.7" fill="#7f7f7f"/>
<polygon points="402.9,125.6 409.6,129.7 405.1,131.3" fill="#868686"/>
<polygon points="412.9,125.4 415.3,125.6 409.6,129.7" fill="#a5a5a5"/>
<polygon points="415.3,125.6 416.6,130.3 409.6,129.7" fill="#818181"/>
<polygon points="415.3,125.6 423.6,121.7 416.6,130.3" fill="#a9a9a9"/>
<polygon points="423.6,121.7 424.6,129.0 416.6,130.3" fill="#d3d3d3"/>
<polygon points="423.6,121.7 426.7,126.2 430.6,129.5" fill="#e4e4e4"/>
<polygon points="423.6,121.7 430.6,129.5 424.6,129.0" fill="#c5c5c5"/>
<polygon points="426.7,126.2 435.7,122.8 435.0,128.9" fill="#aeaeae"/>
<polygon points="426.7,126.2 435.0,128.9 430.6,129.5" fill="#c6c6c6"/>
<polygon points="435.7,122.8 439.1,122.3 441.0,132.3" fill="#afafaf"/>
<polygon points="435.7,122.8 441.0,132.3 435.0,128.9" fill="#e1e1e1"/>
<polygon points="354.7,130.5 363.9,132.1 363.7,138.1" fill="#1b1b1b"/>
<polygon points="363.9,132.1 368.2,132.3 363.7,138.1" fill="#282828"/>
<polygon points="368.2,132.3 366.9,136.3 363.7,138.1" fill="#282828"/>
<polygon points="368.2,132.3 375.1,129.9 366.9,136.3" fill="#5e5e5e"/>
<polygon points="375.1,129.9 372.8,134.2 366.9,136.3" fill="#6e6e6e"/>
<polygon points="375.1,129.9 382.9,127.8 372.8,134.2" fill="#585858"/>
<polygon points="382.9,127.8 382.5,136.4 372.8,134.2" fill="#5d5d5d"/>
<polygon points="382.9,127.8 388.0,130.6 389.0,135.7" fill="#434343"/>
<polygon points="382.9,127.8 389.0,135.7 382.5,136.4" fill="#5a5a5a"/>
<polygon points="388.0,130.6 392.2,131.7 389.0,135.7" fill="#393939"/>
<polygon points="392.2,131.7 390.7,135.5 389.0,135.7" fill="#424242"/>
<polygon points="392.2,131.7 398.4,129.9 390.7,135.5" fill="#373737"/>
<polygon points="398.4,129.9 399.4,138.1 390.7,135.5" fill="#2f2f2f"/>
<polygon points="398.4,129.9 405.1,131.3 407.3,135.9" fill="#5f5f5f"/>
<polygon points="398.4,129.9 407.3,135.9 399.4,138.1" fill="#4b4b4b"/>
<polygon points="405.1,131.3 409.6,129.7 407.3,135.9" fill="#686868"/>
<polygon points="409.6,129.7 410.6,134.1 407.3,135.9" fill="#6c6c6c"/>
<polygon points="409.6,129.7 416.6,130.3 410.6,134.1" fill="#6f6f6f"/>
<polygon points="416.6,130.3 417.7,134.6 410.6,134.1" fill="#939393"/>
<polygon points="416.6,130.3 424.6,129.0 421.3,133.7" fill="#bcbcbc"/>
<polygon points="416.6,130.3 421.3,133.7 417.7,134.6" fill="#999999"/>
<polygon points="424.6,129.0 430.6,129.5 421.3,133.7" fill="#b0b0b0"/>
<polygon points="430.6,129.5 426.6,136.9 421.3,133.7" fill="#dbdbdb"/>
<polygon points="430.6,129.5 435.0,128.9 433.2,138.2" fill="#a5a5a5"/>
<polygon points="430.6,129.5 433.2,138.2 426.6,136.9" fill="#a7a7a7"/>
<polygon points="435.0,128.9 441.0,132.3 439.0,137.8" fill="#bdbdbd"/>
<polygon points="435.0,128.9 439.0,137.8 433.2,138.2" fill="#e6e6e6"/>
<polygon points="441.0,132.3 445.2,133.7 439.0,137.8" fill="#d4d4d4"/>
<polygon points="363.7,138.1 360.9,144.3 357.3,141.0" fill="#212121"/>
<polygon points="363.7,138.1 366.9,136.3 370.0,143.6" fill="#242424"/>
<polygon points="363.7,138.1 370.0,143.6 360.9,144.3" fill="#1d1d1d"/>
<polygon points="366.9,136.3 372.8,134.2 370.0,143.6" fill="#494949"/>
<polygon points="372.8,134.2 374.2,142.5 370.0,143.6" fill="#686868"/>
<polygon points="372.8,134.2 382.5,136.4 383.3,143.6" fill="#565656"/>
<polygon points="372.8,134.2 383.3,143.6 374.2,142.5" fill="#8e8e8e"/>
<polygon points="382.5,136.4 389.0,135.7 387.5,141.1" fill="#4e4e4e"/>
<polygon points="382.5,136.4 387.5,141.1 383.3,143.6" fill="#686868"/>
<polygon points="389.0,135.7 390.7,135.5 392.7,143.9" fill="#505050"/>
<polygon points="389.0,135.7 392.7,143.9 387.5,141.1" fill="#5a5a5a"/>
<polygon points="390.7,135.5 399.4,138.1 392.7,143.9" fill="#393939"/>
<polygon points="399.4,138.1 398.4,142.9 392.7,143.9" fill="#272727"/>
<polygon points="399.4,138.1 407.3,135.9 398.4,142.9" fill="#3a3a3a"/>
<polygon points="407.3,135.9 405.5,143.9 398.4,142.9" fill="#4f4f4f"/>
<polygon points="407.3,135.9 410.6,134.1 405.5,143.9" fill="#565656"/>
<polygon points="410.6,134.1 412.5,141.0 405.5,143.9" fill="#5c5c5c"/>
<polygon points="410.6,134.1 417.7,134.6 412.5,141.0" fill="#696969"/>
<polygon points="417.7,134.6 414.6,140.9 412.5,141.0" fill="#696969"/>
<polygon points="417.7,134.6 421.3,133.7 422.6,142.4" fill="#adadad"/>
<polygon points="417.7,134.6 422.6,142.4 414.6,140.9" fill="#8d8d8d"/>
<polygon points="421.3,133.7 426.6,136.9 430.5,143.9" fill="#d6d6d6"/>
<polygon points="421.3,133.7 430.5,143.9 422.6,142.4" fill="#afafaf"/>
<polygon points="426.6,136.9 433.2,138.2 432.8,143.6" fill="#c9c9c9"/>
<polygon points="426.6,136.9 432.8,143.6 430.5,143.9" fill="#dcdcdc"/>
<polygon points="433.2,138.2 439.0,137.8 442.5,143.8" fill="#bfbfbf"/>
<polygon points="433.2,138.2 442.5,143.8 432.8,143.6" fill="#c9c9c9"/>
<polygon points="439.0,137.8 445.2,133.7 442.5,143.8" fill="#cecece"/>
<polygon points="445.2,133.7 447.3,140.9 442.5,143.8" fill="#aeaeae"/>
<polygon points="360.9,144.3 370.0,143.6 364.4,146.3" fill="#1c1c1c"/>
<polygon points="370.0,143.6 369.5,147.3 364.4,146.3" fill="#202020"/>
<polygon points="370.0,143.6 374.2,142.5 369.5,147.3" fill="#373737"/>
<polygon points="374.2,142.5 375.1,145.7 369.5,147.3" fill="#5d5d5d"/>
<polygon points="374.2,142.5 383.3,143.6 375.1,145.7" fill="#6b6b6b"/>
<polygon points="383.3,143.6 378.8,150.4 375.1,145.7" fill="#6c6c6c"/>
<polygon points="383.3,143.6 387.5,141.1 378.8,150.4" fill="#525252"/>
<polygon points="387.5,141.1 388.8,147.9 378.8,150.4" fill="#545454"/>
<polygon points="387.5,141.1 392.7,143.9 388.8,147.9" fill="#575757"/>
<polygon points="392.7,143.9 393.3,146.9 388.8,147.9" fill="#525252"/>
<polygon points="392.7,143.9 398.4,142.9 400.3,147.6" fill="#3a3a3a"/>
<polygon points="392.7,143.9 400.3,147.6 393.3,146.9" fill="#424242"/>
<polygon points="398.4,142.9 405.5,143.9 407.1,149.3" fill="#4d4d4d"/>
<polygon points="398.4,142.9 407.1,149.3 400.3,147.6" fill="#474747"/>
<polygon points="405.5,143.9 412.5,141.0 407.1,149.3" fill="#5a5a5a"/>
<polygon points="412.5,141.0 412.5,150.2 407.1,149.3" fill="#696969"/>
<polygon points="412.5,141.0 414.6,140.9 415.8,145.8" fill="#6c6c6c"/>
<polygon points="412.5,141.0 415.8,145.8 412.5,150.2" fill="#5a5a5a"/>
<polygon points="414.6,140.9 422.6,142.4 421.6,146.5" fill="#999999"/>
<polygon points="414.6,140.9 421.6,146.5 415.8,145.8" fill="#757575"/>
<polygon points="422.6,142.4 430.5,143.9 427.0,145.8" fill="#a1a1a1"/>
<polygon points="422.6,142.4 427.0,145.8 421.6,146.5" fill="#848484"/>
<polygon points="430.5,143.9 432.8,143.6 427.0,145.8" fill="#bebebe"/>
<polygon points="432.8,143.6 435.3,149.8 427.0,145.8" fill="#bdbdbd"/>
<polygon points="432.8,143.6 442.5,143.8 435.3,149.8" fill="#d4d4d4"/>
<polygon points="442.5,143.8 440.8,150.1 435.3,149.8" fill="#a4a4a4"/>
<polygon points="442.5,143.8 447.3,140.9 449.0,145.9" fill="#d0d0d0"/>
<polygon points="442.5,143.8 449.0,145.9 440.8,150.1" fill="#c8c8c8"/>
<polygon points="364.4,146.3 364.0,152.5 357.9,151.7" fill="#1c1c1c"/>
<polygon points="364.4,146.3 369.5,147.3 366.8,156.1" fill="#171717"/>
<polygon points="364.4,146.3 366.8,156.1 364.0,152.5" fill="#1a1a1a"/>
<polygon points="369.5,147.3 375.1,145.7 366.8,156.1" fill="#2f2f2f"/>
<polygon points="375.1,145.7 373.7,156.1 366.8,156.1" fill="#393939"/>
<polygon points="375.1,145.7 378.8,150.4 382.8,155.9" fill="#757575"/>
<polygon points="375.1,145.7 382.8,155.9 373.7,156.1" fill="#565656"/>
<polygon points="378.8,150.4 388.8,147.9 385.3,153.7" fill="#4f4f4f"/>
<polygon points="378.8,150.4 385.3,153.7 382.8,155.9" fill="#616161"/>
<polygon points="388.8,147.9 393.3,146.9 391.1,156.1" fill="#545454"/>
<polygon points="388.8,147.9 391.1,156.1 385.3,153.7" fill="#575757"/>
<polygon points="393.3,146.9 400.3,147.6 391.1,156.1" fill="#555555"/>
<polygon points="400.3,147.6 400.6,154.6 391.1,156.1" fill="#444444"/>
<polygon points="400.3,147.6 407.1,149.3 400.6,154.6" fill="#4c4c4c"/>
<polygon points="407.1,149.3 404.8,153.2 400.6,154.6" fill="#575757"/>
<polygon points="407.1,149.3 412.5,150.2 412.6,153.9" fill="#484848"/>
<polygon points="407.1,149.3 412.6,153.9 404.8,153.2" fill="#545454"/>
<polygon points="412.5,150.2 415.8,145.8 417.6,152.3" fill="#6f6f6f"/>
<polygon points="412.5,150.2 417.6,152.3 412.6,153.9" fill="#5a5a5a"/>
<polygon points="415.8,145.8 421.6,146.5 417.6,152.3" fill="#6f6f6f"/>
<polygon points="421.6,146.5 421.7,151.9 417.6,152.3" fill="#6c6c6c"/>
<polygon points="421.6,146.5 427.0,145.8 421.7,151.9" fill="#919191"/>
<polygon points="427.0,145.8 430.0,154.3 421.7,151.9" fill="#8d8d8d"/>
<polygon points="427.0,145.8 435.3,149.8 433.3,155.8" fill="#b2b2b2"/>
<polygon points="427.0,145.8 433.3,155.8 430.0,154.3" fill="#b1b1b1"/>
<polygon points="435.3,149.8 440.8,150.1 439.9,153.6" fill="#a7a7a7"/>
<polygon points="435.3,149.8 439.9,153.6 433.3,155.8" fill="#bcbcbc"/>
<polygon points="440.8,150.1 449.0,145.9 439.9,153.6" fill="#a1a1a1"/>
<polygon points="449.0,145.9 445.3,152.9 439.9,153.6" fill="#afafaf"/>
<polygon points="449.0,145.9 453.5,147.5 445.3,152.9" fill="#b0b0b0"/>
<polygon points="453.5,147.5 454.6,153.2 445.3,152.9" fill="#d1d1d1"/>
<polygon points="364.0,152.5 366.8,156.1 361.0,158.0" fill="#141414"/>
<polygon points="366.8,156.1 369.5,160.0 361.0,158.0" fill="#171717"/>
<polygon points="366.8,156.1 373.7,156.1 373.9,158.6" fill="#2f2f2f"/>
<polygon points="366.8,156.1 373.9,158.6 369.5,160.0" fill="#232323"/>
<polygon points="373.7,156.1 382.8,155.9 373.9,158.6" fill="#4c4c4c"/>
<polygon points="382.8,155.9 381.5,161.0 373.9,158.6" fill="#696969"/>
<polygon points="382.8,155.9 385.3,153.7 388.5,160.4" fill="#5f5f5f"/>
<polygon points="382.8,155.9 388.5,160.4 381.5,161.0" fill="#5a5a5a"/>
<polygon points="385.3,153.7 391.1,156.1 388.5,160.4" fill="#595959"/>
<polygon points="391.1,156.1 391.6,157.9 388.5,160.4" fill="#4a4a4a"/>
<polygon points="391.1,156.1 400.6,154.6 391.6,157.9" fill="#565656"/>
<polygon points="400.6,154.6 400.1,159.6 391.6,157.9" fill="#606060"/>
<polygon points="400.6,154.6 404.8,153.2 400.1,159.6" fill="#494949"/>
<polygon points="404.8,153.2 406.1,157.9 400.1,159.6" fill="#4d4d4d"/>
<polygon points="404.8,153.2 412.6,153.9 412.5,159.2" fill="#3f3f3f"/>
<polygon points="404.8,153.2 412.5,159.2 406.1,157.9" fill="#535353"/>
<polygon points="412.6,153.9 417.6,152.3 412.5,159.2" fill="#515151"/>
<polygon points="417.6,152.3 418.6,161.7 412.5,159.2" fill="#505050"/>
<polygon points="417.6,152.3 421.7,151.9 418.6,161.7" fill="#4b4b4b"/>
<polygon points="421.7,151.9 423.0,157.7 418.6,161.7" fill="#535353"/>
<polygon points="421.7,151.9 430.0,154.3 423.0,157.7" fill="#777777"/>
<polygon points="430.0,154.3 431.0,159.9 423.0,157.7" fill="#7c7c7c"/>
<polygon points="430.0,154.3 433.3,155.8 436.8,158.9" fill="#979797"/>
<polygon points="430.0,154.3 436.8,158.9 431.0,159.9" fill="#a4a4a4"/>
<polygon points="433.3,155.8 439.9,153.6 439.5,161.6" fill="#d7d7d7"/>
<polygon points="433.3,155.8 439.5,161.6 436.8,158.9" fill="#cecece"/>
<polygon points="439.9,153.6 445.3,152.9 439.5,161.6" fill="#ababab"/>
<polygon points="445.3,152.9 446.4,158.4 439.5,161.6" fill="#bababa"/>
<polygon points="445.3,152.9 454.6,153.2 452.4,160.5" fill="#b1b1b1"/>
<polygon points="445.3,152.9 452.4,160.5 446.4,158.4" fill="#9d9d9d"/>
<polygon points="457.4,154.0 456.6,160.1 452.4,160.5" fill="#d7d7d7"/>
<polygon points="369.5,160.0 368.5,164.3 361.9,164.2" fill="#131313"/>
<polygon points="369.5,160.0 373.9,158.6 375.4,167.7" fill="#2e2e2e"/>
<polygon points="369.5,160.0 375.4,167.7 368.5,164.3" fill="#1a1a1a"/>
<polygon points="373.9,158.6 381.5,161.0 379.3,166.3" fill="#606060"/>
<polygon points="373.9,158.6 379.3,166.3 375.4,167.7" fill="#343434"/>
<polygon points="381.5,161.0 388.5,160.4 379.3,166.3" fill="#494949"/>
<polygon points="388.5,160.4 388.2,164.4 379.3,166.3" fill="#555555"/>
<polygon points="388.5,160.4 391.6,157.9 388.2,164.4" fill="#464646"/>
<polygon points="391.6,157.9 394.6,168.1 388.2,164.4" fill="#5b5b5b"/>
<polygon points="391.6,157.9 400.1,159.6 394.6,168.1" fill="#626262"/>
<polygon points="400.1,159.6 398.5,165.6 394.6,168.1" fill="#646464"/>
<polygon points="400.1,159.6 406.1,157.9 398.5,165.6" fill="#616161"/>
<polygon points="406.1,157.9 406.6,166.1 398.5,165.6" fill="#575757"/>
<polygon points="406.1,157.9 412.5,159.2 406.6,166.1" fill="#515151"/>
<polygon points="412.5,159.2 410.5,168.1 406.6,166.1" fill="#414141"/>
<polygon points="412.5,159.2 418.6,161.7 410.5,168.1" fill="#353535"/>
<polygon points="418.6,161.7 418.3,165.2 410.5,168.1" fill="#2b2b2b"/>
<polygon points="418.6,161.7 423.0,157.7 421.8,165.2" fill="#585858"/>
<polygon points="418.6,161.7 421.8,165.2 418.3,165.2" fill="#494949"/>
<polygon points="423.0,157.7 431.0,159.9 428.7,168.3" fill="#777777"/>
<polygon points="423.0,157.7 428.7,168.3 421.8,165.2" fill="#454545"/>
<polygon points="431.0,159.9 436.8,158.9 436.5,168.0" fill="#8b8b8b"/>
<polygon points="431.0,159.9 436.5,168.0 428.7,168.3" fill="#656565"/>
<polygon points="436.8,158.9 439.5,161.6 436.5,168.0" fill="#9f9f9f"/>
<polygon points="439.5,161.6 442.5,167.7 436.5,168.0" fill="#a0a0a0"/>
<polygon points="439.5,161.6 446.4,158.4 442.5,167.7" fill="#b7b7b7"/>
<polygon points="446.4,158.4 444.9,166.1 442.5,167.7" fill="#bcbcbc"/>
<polygon points="446.4,158.4 452.4,160.5 455.2,168.1" fill="#b3b3b3"/>
<polygon points="446.4,158.4 455.2,168.1 444.9,166.1" fill="#d1d1d1"/>
<polygon points="452.4,160.5 456.6,160.1 457.8,165.6" fill="#b7b7b7"/>
<polygon points="452.4,160.5 457.8,165.6 455.2,168.1" fill="#b1b1b1"/>
<polygon points="368.5,164.3 368.0,170.8 362.0,171.6" fill="#121212"/>
<polygon points="368.5,164.3 375.4,167.7 373.0,172.2" fill="#1d1d1d"/>
<polygon points="368.5,164.3 373.0,172.2 368.0,170.8" fill="#141414"/>
<polygon points="375.4,167.7 379.3,166.3 373.0,172.2" fill="#262626"/>
<polygon points="379.3,166.3 382.6,172.5 373.0,172.2" fill="#3e3e3e"/>
<polygon points="379.3,166.3 388.2,164.4 387.3,172.7" fill="#5e5e5e"/>
<polygon points="379.3,166.3 387.3,172.7 382.6,172.5" fill="#434343"/>
<polygon points="388.2,164.4 394.6,168.1 391.6,173.0" fill="#4d4d4d"/>
<polygon points="388.2,164.4 391.6,173.0 387.3,172.7" fill="#505050"/>
<polygon points="394.6,168.1 398.5,165.6 398.8,172.2" fill="#696969"/>
<polygon points="394.6,168.1 398.8,172.2 391.6,173.0" fill="#595959"/>
<polygon points="398.5,165.6 406.6,166.1 398.8,172.2" fill="#666666"/>
<polygon points="406.6,166.1 405.5,171.9 398.8,172.2" fill="#7c7c7c"/>
<polygon points="406.6,166.1 410.5,168.1 405.5,171.9" fill="#525252"/>
<polygon points="410.5,168.1 410.1,170.8 405.5,171.9" fill="#484848"/>
<polygon points="410.5,168.1 418.3,165.2 415.7,172.1" fill="#0d0d0d"/>
<polygon points="410.5,168.1 415.7,172.1 410.1,170.8" fill="#1b1b1b"/>
<polygon points="418.3,165.2 421.8,165.2 422.4,172.4" fill="#2e2e2e"/>
<polygon points="418.3,165.2 422.4,172.4 415.7,172.1" fill="#101010"/>
<polygon points="421.8,165.2 428.7,168.3 422.4,172.4" fill="#464646"/>
<polygon points="428.7,168.3 426.7,171.3 422.4,172.4" fill="#515151"/>
<polygon points="428.7,168.3 436.5,168.0 436.7,170.7" fill="#6c6c6c"/>
<polygon points="428.7,168.3 436.7,170.7 426.7,171.3" fill="#575757"/>
<polygon points="436.5,168.0 442.5,167.7 441.3,172.0" fill="#a5a5a5"/>
<polygon points="436.5,168.0 441.3,172.0 436.7,170.7" fill="#8e8e8e"/>
<polygon points="442.5,167.7 444.9,166.1 446.0,174.3" fill="#c3c3c3"/>
<polygon points="442.5,167.7 446.0,174.3 441.3,172.0" fill="#b1b1b1"/>
<polygon points="444.9,166.1 455.2,168.1 452.0,173.3" fill="#b7b7b7"/>
<polygon points="444.9,166.1 452.0,173.3 446.0,174.3" fill="#b8b8b8"/>
<polygon points="455.2,168.1 457.8,165.6 457.4,169.9" fill="#979797"/>
<polygon points="455.2,168.1 457.4,169.9 452.0,173.3" fill="#a7a7a7"/>
<polygon points="368.0,170.8 373.0,172.2 368.5,178.3" fill="#171717"/>
<polygon points="373.0,172.2 374.4,177.1 368.5,178.3" fill="#151515"/>
<polygon points="373.0,172.2 382.6,172.5 374.4,177.1" fill="#262626"/>
<polygon points="382.6,172.5 382.4,179.7 374.4,177.1" fill="#343434"/>
<polygon points="382.6,172.5 387.3,172.7 387.0,177.7" fill="#4c4c4c"/>
<polygon points="382.6,172.5 387.0,177.7 382.4,179.7" fill="#3f3f3f"/>
<polygon points="387.3,172.7 391.6,173.0 391.5,177.1" fill="#5a5a5a"/>
<polygon points="387.3,172.7 391.5,177.1 387.0,177.7" fill="#505050"/>
<polygon points="391.6,173.0 398.8,172.2 391.5,177.1" fill="#505050"/>
<polygon points="398.8,172.2 397.3,178.4 391.5,177.1" fill="#5e5e5e"/>
<polygon points="398.8,172.2 405.5,171.9 405.4,176.0" fill="#929292"/>
<polygon points="398.8,172.2 405.4,176.0 397.3,178.4" fill="#696969"/>
<polygon points="405.5,171.9 410.1,170.8 405.4,176.0" fill="#595959"/>
<polygon points="410.1,170.8 413.0,177.2 405.4,176.0" fill="#3c3c3c"/>
<polygon points="410.1,170.8 415.7,172.1 418.6,179.6" fill="#0b0b0b"/>
<polygon points="410.1,170.8 418.6,179.6 413.0,177.2" fill="#151515"/>
<polygon points="415.7,172.1 422.4,172.4 418.6,179.6" fill="#0d0d0d"/>
<polygon points="422.4,172.4 425.2,176.6 418.6,179.6" fill="#191919"/>
<polygon points="422.4,172.4 426.7,171.3 428.6,180.0" fill="#2b2b2b"/>
<polygon points="422.4,172.4 428.6,180.0 425.2,176.6" fill="#1c1c1c"/>
<polygon points="426.7,171.3 436.7,170.7 428.6,180.0" fill="#424242"/>
<polygon points="436.7,170.7 432.7,175.8 428.6,180.0" fill="#4c4c4c"/>
<polygon points="436.7,170.7 441.3,172.0 432.7,175.8" fill="#777777"/>
<polygon points="441.3,172.0 441.3,178.0 432.7,175.8" fill="#666666"/>
<polygon points="441.3,172.0 446.0,174.3 449.0,179.3" fill="#c0c0c0"/>
<polygon points="441.3,172.0 449.0,179.3 441.3,178.0" fill="#909090"/>
<polygon points="446.0,174.3 452.0,173.3 449.0,179.3" fill="#a6a6a6"/>
<polygon points="452.0,173.3 453.2,180.4 449.0,179.3" fill="#ababab"/>
<polygon points="452.0,173.3 457.4,169.9 459.1,178.1" fill="#c5c5c5"/>
<polygon points="452.0,173.3 459.1,178.1 453.2,180.4" fill="#b0b0b0"/>
<polygon points="457.4,169.9 465.9,177.5 459.1,178.1" fill="#9f9f9f"/>
<polygon points="368.5,178.3 374.4,177.1 368.3,186.4" fill="#151515"/>
<polygon points="374.4,177.1 375.7,181.8 368.3,186.4" fill="#1b1b1b"/>
<polygon points="374.4,177.1 382.4,179.7 380.6,185.4" fill="#333333"/>
<polygon points="374.4,177.1 380.6,185.4 375.7,181.8" fill="#232323"/>
<polygon points="382.4,179.7 387.0,177.7 386.1,184.9" fill="#484848"/>
<polygon points="382.4,179.7 386.1,184.9 380.6,185.4" fill="#4a4a4a"/>
<polygon points="387.0,177.7 391.5,177.1 386.1,184.9" fill="#434343"/>
<polygon points="391.5,177.1 390.6,183.1 386.1,184.9" fill="#5d5d5d"/>
<polygon points="391.5,177.1 397.3,178.4 400.6,184.4" fill="#606060"/>
<polygon points="391.5,177.1 400.6,184.4 390.6,183.1" fill="#5d5d5d"/>
<polygon points="397.3,178.4 405.4,176.0 400.6,184.4" fill="#808080"/>
<polygon points="405.4,176.0 405.8,182.5 400.6,184.4" fill="#7f7f7f"/>
<polygon points="405.4,176.0 413.0,177.2 405.8,182.5" fill="#595959"/>
<polygon points="413.0,177.2 411.0,184.3 405.8,182.5" fill="#595959"/>
<polygon points="413.0,177.2 418.6,179.6 411.0,184.3" fill="#1f1f1f"/>
<polygon points="418.6,179.6 415.9,184.7 411.0,184.3" fill="#262626"/>
<polygon points="418.6,179.6 425.2,176.6 423.2,186.4" fill="#1b1b1b"/>
<polygon points="418.6,179.6 423.2,186.4 415.9,184.7" fill="#1f1f1f"/>
<polygon points="425.2,176.6 428.6,180.0 423.2,186.4" fill="#222222"/>
<polygon points="428.6,180.0 429.4,183.6 423.2,186.4" fill="#272727"/>
<polygon points="428.6,180.0 432.7,175.8 429.4,183.6" fill="#484848"/>
<polygon points="432.7,175.8 433.2,182.4 429.4,183.6" fill="#4d4d4d"/>
<polygon points="432.7,175.8 441.3,178.0 442.2,182.1" fill="#696969"/>
<polygon points="432.7,175.8 442.2,182.1 433.2,182.4" fill="#666666"/>
<polygon points="441.3,178.0 449.0,179.3 442.2,182.1" fill="#8c8c8c"/>
<polygon points="449.0,179.3 445.1,182.4 442.2,182.1" fill="#9b9b9b"/>
<polygon points="449.0,179.3 453.2,180.4 453.1,185.6" fill="#868686"/>
<polygon points="449.0,179.3 453.1,185.6 445.1,182.4" fill="#929292"/>
<polygon points="453.2,180.4 459.1,178.1 459.5,185.5" fill="#bebebe"/>
<polygon points="453.2,180.4 459.5,185.5 453.1,185.6" fill="#909090"/>
<polygon points="459.1,178.1 465.9,177.5 459.5,185.5" fill="#999999"/>
<polygon points="465.9,177.5 462.9,181.7 459.5,185.5" fill="#939393"/>
<polygon points="368.3,186.4 375.7,181.8 368.3,188.5" fill="#242424"/>
<polygon points="375.7,181.8 377.3,189.0 368.3,188.5" fill="#1c1c1c"/>
<polygon points="375.7,181.8 380.6,185.4 377.3,189.0" fill="#353535"/>
<polygon points="380.6,185.4 381.3,188.2 377.3,189.0" fill="#343434"/>
<polygon points="380.6,185.4 386.1,184.9 381.3,188.2" fill="#4b4b4b"/>
<polygon points="386.1,184.9 387.2,189.5 381.3,188.2" fill="#5d5d5d"/>
<polygon points="386.1,184.9 390.6,183.1 387.2,189.5" fill="#7b7b7b"/>
<polygon points="390.6,183.1 392.5,187.9 387.2,189.5" fill="#676767"/>
<polygon points="390.6,183.1 400.6,184.4 397.2,191.6" fill="#737373"/>
<polygon points="390.6,183.1 397.2,191.6 392.5,187.9" fill="#5f5f5f"/>
<polygon points="400.6,184.4 405.8,182.5 404.3,188.8" fill="#646464"/>
<polygon points="400.6,184.4 404.3,188.8 397.2,191.6" fill="#646464"/>
<polygon points="405.8,182.5 411.0,184.3 404.3,188.8" fill="#5a5a5a"/>
<polygon points="411.0,184.3 409.5,189.0 404.3,188.8" fill="#525252"/>
<polygon points="411.0,184.3 415.9,184.7 415.7,187.8" fill="#292929"/>
<polygon points="411.0,184.3 415.7,187.8 409.5,189.0" fill="#414141"/>
<polygon points="415.9,184.7 423.2,186.4 423.8,189.2" fill="#212121"/>
<polygon points="415.9,184.7 423.8,189.2 415.7,187.8" fill="#333333"/>
<polygon points="423.2,186.4 429.4,183.6 427.3,191.0" fill="#121212"/>
<polygon points="423.2,186.4 427.3,191.0 423.8,189.2" fill="#171717"/>
<polygon points="429.4,183.6 433.2,182.4 433.0,188.9" fill="#434343"/>
<polygon points="429.4,183.6 433.0,188.9 427.3,191.0" fill="#262626"/>
<polygon points="433.2,182.4 442.2,182.1 442.6,188.2" fill="#555555"/>
<polygon points="433.2,182.4 442.6,188.2 433.0,188.9" fill="#505050"/>
<polygon points="442.2,182.1 445.1,182.4 446.7,191.6" fill="#666666"/>
<polygon points="442.2,182.1 446.7,191.6 442.6,188.2" fill="#757575"/>
<polygon points="445.1,182.4 453.1,185.6 454.5,188.4" fill="#777777"/>
<polygon points="445.1,182.4 454.5,188.4 446.7,191.6" fill="#7c7c7c"/>
<polygon points="453.1,185.6 459.5,185.5 458.3,191.1" fill="#a8a8a8"/>
<polygon points="453.1,185.6 458.3,191.1 454.5,188.4" fill="#9f9f9f"/>
<polygon points="459.5,185.5 462.9,181.7 464.4,192.2" fill="#acacac"/>
<polygon points="459.5,185.5 464.4,192.2 458.3,191.1" fill="#9e9e9e"/>
<polygon points="462.9,181.7 472.3,183.1 464.4,192.2" fill="#b1b1b1"/>
<polygon points="472.3,183.1 469.6,192.2 464.4,192.2" fill="#c3c3c3"/>
<polygon points="368.3,188.5 377.3,189.0 377.0,197.3" fill="#222222"/>
<polygon points="377.3,189.0 381.3,188.2 382.8,197.7" fill="#282828"/>
<polygon points="377.3,189.0 382.8,197.7 377.0,197.3" fill="#222222"/>
<polygon points="381.3,188.2 387.2,189.5 382.8,197.7" fill="#404040"/>
<polygon points="387.2,189.5 385.2,194.9 382.8,197.7" fill="#505050"/>
<polygon points="387.2,189.5 392.5,187.9 390.7,196.9" fill="#767676"/>
<polygon points="387.2,189.5 390.7,196.9 385.2,194.9" fill="#515151"/>
<polygon points="392.5,187.9 397.2,191.6 399.8,195.3" fill="#606060"/>
<polygon points="392.5,187.9 399.8,195.3 390.7,196.9" fill="#4d4d4d"/>
<polygon points="397.2,191.6 404.3,188.8 399.8,195.3" fill="#4a4a4a"/>
<polygon points="404.3,188.8 404.6,196.8 399.8,195.3" fill="#4b4b4b"/>
<polygon points="404.3,188.8 409.5,189.0 412.0,194.8" fill="#4b4b4b"/>
<polygon points="404.3,188.8 412.0,194.8 404.6,196.8" fill="#575757"/>
<polygon points="409.5,189.0 415.7,187.8 418.7,195.3" fill="#383838"/>
<polygon points="409.5,189.0 418.7,195.3 412.0,194.8" fill="#353535"/>
<polygon points="415.7,187.8 423.8,189.2 418.7,195.3" fill="#353535"/>
<polygon points="423.8,189.2 423.6,194.5 418.7,195.3" fill="#292929"/>
<polygon points="423.8,189.2 427.3,191.0 423.6,194.5" fill="#2b2b2b"/>
<polygon points="427.3,191.0 427.2,198.0 423.6,194.5" fill="#313131"/>
<polygon points="427.3,191.0 433.0,188.9 427.2,198.0" fill="#2b2b2b"/>
<polygon points="433.0,188.9 436.1,197.0 427.2,198.0" fill="#3c3c3c"/>
<polygon points="433.0,188.9 442.6,188.2 438.8,193.8" fill="#484848"/>
<polygon points="433.0,188.9 438.8,193.8 436.1,197.0" fill="#4f4f4f"/>
<polygon points="442.6,188.2 446.7,191.6 445.4,194.6" fill="#6a6a6a"/>
<polygon points="442.6,188.2 445.4,194.6 438.8,193.8" fill="#595959"/>
<polygon points="446.7,191.6 454.5,188.4 445.4,194.6" fill="#5c5c5c"/>
<polygon points="454.5,188.4 452.1,195.4 445.4,194.6" fill="#7d7d7d"/>
<polygon points="454.5,188.4 458.3,191.1 452.1,195.4" fill="#8d8d8d"/>
<polygon points="458.3,191.1 456.8,195.1 452.1,195.4" fill="#767676"/>
<polygon points="458.3,191.1 464.4,192.2 456.8,195.1" fill="#a0a0a0"/>
<polygon points="464.4,192.2 465.7,194.5 456.8,195.1" fill="#b7b7b7"/>
<polygon points="464.4,192.2 469.6,192.2 465.7,194.5" fill="#939393"/>
<polygon points="469.6,192.2 472.6,196.3 465.7,194.5" fill="#9d9d9d"/>
<polygon points="469.6,192.2 477.0,188.7 472.6,196.3" fill="#8c8c8c"/>
<polygon points="377.0,197.3 382.8,197.7 376.3,199.8" fill="#171717"/>
<polygon points="382.8,197.7 382.0,203.5 376.3,199.8" fill="#202020"/>
<polygon points="382.8,197.7 385.2,194.9 382.0,203.5" fill="#242424"/>
<polygon points="385.2,194.9 385.9,202.2 382.0,203.5" fill="#2d2d2d"/>
<polygon points="385.2,194.9 390.7,196.9 395.3,202.7" fill="#616161"/>
<polygon points="385.2,194.9 395.3,202.7 385.9,202.2" fill="#494949"/>
<polygon points="390.7,196.9 399.8,195.3 395.3,202.7" fill="#545454"/>
<polygon points="399.8,195.3 399.2,200.8 395.3,202.7" fill="#3c3c3c"/>
<polygon points="399.8,195.3 404.6,196.8 399.2,200.8" fill="#525252"/>
<polygon points="404.6,196.8 402.9,201.3 399.2,200.8" fill="#3d3d3d"/>
<polygon points="404.6,196.8 412.0,194.8 402.9,201.3" fill="#4f4f4f"/>
<polygon points="412.0,194.8 410.6,200.6 402.9,201.3" fill="#454545"/>
<polygon points="412.0,194.8 418.7,195.3 416.1,200.3" fill="#2f2f2f"/>
<polygon points="412.0,194.8 416.1,200.3 410.6,200.6" fill="#2b2b2b"/>
<polygon points="418.7,195.3 423.6,194.5 416.1,200.3" fill="#2f2f2f"/>
<polygon points="423.6,194.5 424.0,202.8 416.1,200.3" fill="#282828"/>
<polygon points="423.6,194.5 427.2,198.0 424.0,202.8" fill="#343434"/>
<polygon points="427.2,198.0 427.7,200.8 424.0,202.8" fill="#373737"/>
<polygon points="427.2,198.0 436.1,197.0 427.7,200.8" fill="#3a3a3a"/>
<polygon points="436.1,197.0 435.1,201.7 427.7,200.8" fill="#414141"/>
<polygon points="436.1,197.0 438.8,193.8 435.1,201.7" fill="#464646"/>
<polygon points="438.8,193.8 443.1,201.3 435.1,201.7" fill="#4c4c4c"/>
<polygon points="438.8,193.8 445.4,194.6 443.1,201.3" fill="#4b4b4b"/>
<polygon points="445.4,194.6 446.0,203.8 443.1,201.3" fill="#4d4d4d"/>
<polygon points="445.4,194.6 452.1,195.4 446.0,203.8" fill="#696969"/>
<polygon points="452.1,195.4 451.3,202.3 446.0,203.8" fill="#636363"/>
<polygon points="452.1,195.4 456.8,195.1 451.3,202.3" fill="#6c6c6c"/>
<polygon points="456.8,195.1 458.2,203.5 451.3,202.3" fill="#6f6f6f"/>
<polygon points="456.8,195.1 465.7,194.5 458.2,203.5" fill="#797979"/>
<polygon points="465.7,194.5 465.2,203.3 458.2,203.5" fill="#9a9a9a"/>
<polygon points="465.7,194.5 472.6,196.3 465.2,203.3" fill="#999999"/>
<polygon points="472.6,196.3 469.4,202.8 465.2,203.3" fill="#ababab"/>
<polygon points="472.6,196.3 478.0,194.8 477.5,201.8" fill="#9c9c9c"/>
<polygon points="472.6,196.3 477.5,201.8 469.4,202.8" fill="#c1c1c1"/>
<polygon points="376.3,199.8 382.0,203.5 382.6,207.0" fill="#1c1c1c"/>
<polygon points="376.3,199.8 382.6,207.0 372.7,209.3" fill="#171717"/>
<polygon points="382.0,203.5 385.9,202.2 382.6,207.0" fill="#1a1a1a"/>
<polygon points="385.9,202.2 385.5,208.7 382.6,207.0" fill="#242424"/>
<polygon points="385.9,202.2 395.3,202.7 385.5,208.7" fill="#444444"/>
<polygon points="395.3,202.7 394.7,210.0 385.5,208.7" fill="#545454"/>
<polygon points="395.3,202.7 399.2,200.8 397.4,209.4" fill="#404040"/>
<polygon points="395.3,202.7 397.4,209.4 394.7,210.0" fill="#4f4f4f"/>
<polygon points="399.2,200.8 402.9,201.3 397.4,209.4" fill="#414141"/>
<polygon points="402.9,201.3 406.6,209.2 397.4,209.4" fill="#313131"/>
<polygon points="402.9,201.3 410.6,200.6 410.2,206.5" fill="#353535"/>
<polygon points="402.9,201.3 410.2,206.5 406.6,209.2" fill="#282828"/>
<polygon points="410.6,200.6 416.1,200.3 418.6,207.1" fill="#282828"/>
<polygon points="410.6,200.6 418.6,207.1 410.2,206.5" fill="#252525"/>
<polygon points="416.1,200.3 424.0,202.8 418.6,207.1" fill="#1d1d1d"/>
<polygon points="424.0,202.8 422.4,208.2 418.6,207.1" fill="#232323"/>
<polygon points="424.0,202.8 427.7,200.8 422.4,208.2" fill="#212121"/>
<polygon points="427.7,200.8 428.4,209.6 422.4,208.2" fill="#262626"/>
<polygon points="427.7,200.8 435.1,201.7 428.4,209.6" fill="#343434"/>
<polygon points="435.1,201.7 433.7,205.8 428.4,209.6" fill="#333333"/>
<polygon points="435.1,201.7 443.1,201.3 433.7,205.8" fill="#3c3c3c"/>
<polygon points="443.1,201.3 441.3,208.6 433.7,205.8" fill="#4e4e4e"/>
<polygon points="443.1,201.3 446.0,203.8 448.5,209.0" fill="#505050"/>
<polygon points="443.1,201.3 448.5,209.0 441.3,208.6" fill="#474747"/>
<polygon points="446.0,203.8 451.3,202.3 448.5,209.0" fill="#646464"/>
<polygon points="451.3,202.3 454.9,210.1 448.5,209.0" fill="#606060"/>
<polygon points="451.3,202.3 458.2,203.5 459.0,208.0" fill="#757575"/>
<polygon points="451.3,202.3 459.0,208.0 454.9,210.1" fill="#626262"/>
<polygon points="458.2,203.5 465.2,203.3 459.0,208.0" fill="#868686"/>
<polygon points="465.2,203.3 463.4,207.0 459.0,208.0" fill="#6a6a6a"/>
<polygon points="465.2,203.3 469.4,202.8 463.4,207.0" fill="#b3b3b3"/>
<polygon points="469.4,202.8 471.4,206.0 463.4,207.0" fill="#c1c1c1"/>
<polygon points="469.4,202.8 477.5,201.8 471.4,206.0" fill="#939393"/>
<polygon points="477.5,201.8 477.9,206.4 471.4,206.0" fill="#aeaeae"/>
<polygon points="477.5,201.8 482.7,210.3 477.9,206.4" fill="#b6b6b6"/>
<polygon points="382.6,207.0 385.5,208.7 389.2,213.9" fill="#1d1d1d"/>
<polygon points="382.6,207.0 389.2,213.9 380.0,214.3" fill="#141414"/>
<polygon points="385.5,208.7 394.7,210.0 393.7,213.0" fill="#404040"/>
<polygon points="385.5,208.7 393.7,213.0 389.2,213.9" fill="#323232"/>
<polygon points="394.7,210.0 397.4,209.4 398.2,215.8" fill="#4a4a4a"/>
<polygon points="394.7,210.0 398.2,215.8 393.7,213.0" fill="#4e4e4e"/>
<polygon points="397.4,209.4 406.6,209.2 402.7,212.5" fill="#313131"/>
<polygon points="397.4,209.4 402.7,212.5 398.2,215.8" fill="#3f3f3f"/>
<polygon points="406.6,209.2 410.2,206.5 402.7,212.5" fill="#343434"/>
<polygon points="410.2,206.5 411.9,213.7 402.7,212.5" fill="#222222"/>
<polygon points="410.2,206.5 418.6,207.1 411.9,213.7" fill="#2d2d2d"/>
<polygon points="418.6,207.1 415.0,214.8 411.9,213.7" fill="#222222"/>
<polygon points="418.6,207.1 422.4,208.2 422.4,214.4" fill="#2c2c2c"/>
<polygon points="418.6,207.1 422.4,214.4 415.0,214.8" fill="#1f1f1f"/>
<polygon points="422.4,208.2 428.4,209.6 428.6,214.1" fill="#303030"/>
<polygon points="422.4,208.2 428.6,214.1 422.4,214.4" fill="#272727"/>
<polygon points="428.4,209.6 433.7,205.8 428.6,214.1" fill="#343434"/>
<polygon points="433.7,205.8 435.3,213.5 428.6,214.1" fill="#2c2c2c"/>
<polygon points="433.7,205.8 441.3,208.6 439.1,212.5" fill="#414141"/>
<polygon points="433.7,205.8 439.1,212.5 435.3,213.5" fill="#333333"/>
<polygon points="441.3,208.6 448.5,209.0 439.1,212.5" fill="#474747"/>
<polygon points="448.5,209.0 448.9,214.2 439.1,212.5" fill="#3f3f3f"/>
<polygon points="448.5,209.0 454.9,210.1 451.1,215.7" fill="#4a4a4a"/>
<polygon points="448.5,209.0 451.1,215.7 448.9,214.2" fill="#565656"/>
<polygon points="454.9,210.1 459.0,208.0 451.1,215.7" fill="#5e5e5e"/>
<polygon points="459.0,208.0 457.8,212.1 451.1,215.7" fill="#5d5d5d"/>
<polygon points="459.0,208.0 463.4,207.0 465.1,212.8" fill="#7e7e7e"/>
<polygon points="459.0,208.0 465.1,212.8 457.8,212.1" fill="#6a6a6a"/>
<polygon points="463.4,207.0 471.4,206.0 465.1,212.8" fill="#909090"/>
<polygon points="471.4,206.0 470.9,214.3 465.1,212.8" fill="#919191"/>
<polygon points="471.4,206.0 477.9,206.4 470.9,214.3" fill="#b2b2b2"/>
<polygon points="477.9,206.4 475.7,214.3 470.9,214.3" fill="#a1a1a1"/>
<polygon points="477.9,206.4 482.7,210.3 475.7,214.3" fill="#9d9d9d"/>
<polygon points="482.7,210.3 481.1,214.1 475.7,214.3" fill="#909090"/>
<polygon points="380.0,214.3 389.2,213.9 387.9,221.6" fill="#1b1b1b"/>
<polygon points="380.0,214.3 387.9,221.6 380.2,221.3" fill="#181818"/>
<polygon points="389.2,213.9 393.7,213.0 391.2,219.4" fill="#353535"/>
<polygon points="389.2,213.9 391.2,219.4 387.9,221.6" fill="#232323"/>
<polygon points="393.7,213.0 398.2,215.8 400.1,222.2" fill="#606060"/>
<polygon points="393.7,213.0 400.1,222.2 391.2,219.4" fill="#535353"/>
<polygon points="398.2,215.8 402.7,212.5 406.1,217.8" fill="#505050"/>
<polygon points="398.2,215.8 406.1,217.8 400.1,222.2" fill="#7a7a7a"/>
<polygon points="402.7,212.5 411.9,213.7 411.5,218.1" fill="#202020"/>
<polygon points="402.7,212.5 411.5,218.1 406.1,217.8" fill="#343434"/>
<polygon points="411.9,213.7 415.0,214.8 417.2,221.5" fill="#0f0f0f"/>
<polygon points="411.9,213.7 417.2,221.5 411.5,218.1" fill="#111111"/>
<polygon points="415.0,214.8 422.4,214.4 417.2,221.5" fill="#1d1d1d"/>
<polygon points="422.4,214.4 421.1,222.0 417.2,221.5" fill="#292929"/>
<polygon points="422.4,214.4 428.6,214.1 421.1,222.0" fill="#282828"/>
<polygon points="428.6,214.1 429.8,218.8 421.1,222.0" fill="#2d2d2d"/>
<polygon points="428.6,214.1 435.3,213.5 433.5,219.7" fill="#303030"/>
<polygon points="428.6,214.1 433.5,219.7 429.8,218.8" fill="#303030"/>
<polygon points="435.3,213.5 439.1,212.5 442.6,220.4" fill="#3c3c3c"/>
<polygon points="435.3,213.5 442.6,220.4 433.5,219.7" fill="#313131"/>
<polygon points="439.1,212.5 448.9,214.2 442.6,220.4" fill="#3c3c3c"/>
<polygon points="448.9,214.2 445.1,217.7 442.6,220.4" fill="#383838"/>
<polygon points="448.9,214.2 451.1,215.7 445.1,217.7" fill="#414141"/>
<polygon points="451.1,215.7 451.1,221.4 445.1,217.7" fill="#373737"/>
<polygon points="451.1,215.7 457.8,212.1 451.1,221.4" fill="#545454"/>
<polygon points="457.8,212.1 457.5,220.3 451.1,221.4" fill="#595959"/>
<polygon points="457.8,212.1 465.1,212.8 464.0,220.9" fill="#525252"/>
<polygon points="457.8,212.1 464.0,220.9 457.5,220.3" fill="#5b5b5b"/>
<polygon points="465.1,212.8 470.9,214.3 470.4,218.3" fill="#8d8d8d"/>
<polygon points="465.1,212.8 470.4,218.3 464.0,220.9" fill="#6c6c6c"/>
<polygon points="470.9,214.3 475.7,214.3 470.4,218.3" fill="#7b7b7b"/>
<polygon points="475.7,214.3 478.8,220.2 470.4,218.3" fill="#9b9b9b"/>
<polygon points="475.7,214.3 481.1,214.1 483.9,221.5" fill="#cecece"/>
<polygon points="475.7,214.3 483.9,221.5 478.8,220.2" fill="#999999"/>
<polygon points="481.1,214.1 489.4,212.0 483.9,221.5" fill="#959595"/>
<polygon points="380.2,221.3 387.9,221.6 381.8,224.9" fill="#131313"/>
<polygon points="387.9,221.6 385.9,226.0 381.8,224.9" fill="#181818"/>
<polygon points="387.9,221.6 391.2,219.4 385.9,226.0" fill="#1a1a1a"/>
<polygon points="391.2,219.4 391.9,226.3 385.9,226.0" fill="#181818"/>
<polygon points="391.2,219.4 400.1,222.2 399.1,228.2" fill="#424242"/>
<polygon points="391.2,219.4 399.1,228.2 391.9,226.3" fill="#333333"/>
<polygon points="400.1,222.2 406.1,217.8 399.1,228.2" fill="#7d7d7d"/>
<polygon points="406.1,217.8 407.4,223.8 399.1,228.2" fill="#484848"/>
<polygon points="406.1,217.8 411.5,218.1 411.3,227.3" fill="#232323"/>
<polygon points="406.1,217.8 411.3,227.3 407.4,223.8" fill="#353535"/>
<polygon points="411.5,218.1 417.2,221.5 411.3,227.3" fill="#1b1b1b"/>
<polygon points="417.2,221.5 418.8,227.3 411.3,227.3" fill="#262626"/>
<polygon points="417.2,221.5 421.1,222.0 423.6,226.6" fill="#282828"/>
<polygon points="417.2,221.5 423.6,226.6 418.8,227.3" fill="#252525"/>
<polygon points="421.1,222.0 429.8,218.8 423.6,226.6" fill="#323232"/>
<polygon points="429.8,218.8 428.3,225.0 423.6,226.6" fill="#343434"/>
<polygon points="429.8,218.8 433.5,219.7 436.4,227.8" fill="#2b2b2b"/>
<polygon points="429.8,218.8 436.4,227.8 428.3,225.0" fill="#343434"/>
<polygon points="433.5,219.7 442.6,220.4 436.4,227.8" fill="#2c2c2c"/>
<polygon points="442.6,220.4 443.1,226.9 436.4,227.8" fill="#3d3d3d"/>
<polygon points="442.6,220.4 445.1,217.7 443.1,226.9" fill="#373737"/>
<polygon points="445.1,217.7 446.1,227.3 443.1,226.9" fill="#3a3a3a"/>
<polygon points="445.1,217.7 451.1,221.4 446.1,227.3" fill="#444444"/>
<polygon points="451.1,221.4 454.1,226.0 446.1,227.3" fill="#404040"/>
<polygon points="451.1,221.4 457.5,220.3 454.1,226.0" fill="#4c4c4c"/>
<polygon points="457.5,220.3 459.6,225.3 454.1,226.0" fill="#474747"/>
<polygon points="457.5,220.3 464.0,220.9 465.2,225.5" fill="#515151"/>
<polygon points="457.5,220.3 465.2,225.5 459.6,225.3" fill="#4b4b4b"/>
<polygon points="464.0,220.9 470.4,218.3 468.9,225.2" fill="#5e5e5e"/>
<polygon points="464.0,220.9 468.9,225.2 465.2,225.5" fill="#484848"/>
<polygon points="470.4,218.3 478.8,220.2 476.2,228.3" fill="#a0a0a0"/>
<polygon points="470.4,218.3 476.2,228.3 468.9,225.2" fill="#848484"/>
<polygon points="478.8,220.2 483.9,221.5 482.9,225.4" fill="#c5c5c5"/>
<polygon points="478.8,220.2 482.9,225.4 476.2,228.3" fill="#989898"/>
<polygon points="483.9,221.5 491.2,217.7 482.9,225.4" fill="#bfbfbf"/>
<polygon points="491.2,217.7 487.8,224.7 482.9,225.4" fill="#c1c1c1"/>
<polygon points="381.8,224.9 385.9,226.0 387.5,233.7" fill="#121212"/>
<polygon points="385.9,226.0 391.9,226.3 387.5,233.7" fill="#181818"/>
<polygon points="391.9,226.3 393.7,230.5 387.5,233.7" fill="#171717"/>
<polygon points="391.9,226.3 399.1,228.2 400.1,234.2" fill="#272727"/>
<polygon points="391.9,226.3 400.1,234.2 393.7,230.5" fill="#212121"/>
<polygon points="399.1,228.2 407.4,223.8 400.1,234.2" fill="#3e3e3e"/>
<polygon points="407.4,223.8 405.5,230.0 400.1,234.2" fill="#2a2a2a"/>
<polygon points="407.4,223.8 411.3,227.3 405.5,230.0" fill="#262626"/>
<polygon points="411.3,227.3 412.5,233.8 405.5,230.0" fill="#2e2e2e"/>
<polygon points="411.3,227.3 418.8,227.3 412.5,233.8" fill="#232323"/>
<polygon points="418.8,227.3 416.2,230.3 412.5,233.8" fill="#292929"/>
<polygon points="418.8,227.3 423.6,226.6 416.2,230.3" fill="#2f2f2f"/>
<polygon points="423.6,226.6 421.5,232.2 416.2,230.3" fill="#252525"/>
<polygon points="423.6,226.6 428.3,225.0 421.5,232.2" fill="#323232"/>
<polygon points="428.3,225.0 430.8,232.7 421.5,232.2" fill="#282828"/>
<polygon points="428.3,225.0 436.4,227.8 430.8,232.7" fill="#373737"/>
<polygon points="436.4,227.8 437.0,230.6 430.8,232.7" fill="#2b2b2b"/>
<polygon points="436.4,227.8 443.1,226.9 440.2,233.2" fill="#2a2a2a"/>
<polygon points="436.4,227.8 440.2,233.2 437.0,230.6" fill="#292929"/>
<polygon points="443.1,226.9 446.1,227.3 447.7,231.5" fill="#3a3a3a"/>
<polygon points="443.1,226.9 447.7,231.5 440.2,233.2" fill="#3a3a3a"/>
<polygon points="446.1,227.3 454.1,226.0 447.7,231.5" fill="#424242"/>
<polygon points="454.1,226.0 453.9,231.2 447.7,231.5" fill="#393939"/>
<polygon points="454.1,226.0 459.6,225.3 453.9,231.2" fill="#363636"/>
<polygon points="459.6,225.3 456.9,231.6 453.9,231.2" fill="#3f3f3f"/>
<polygon points="459.6,225.3 465.2,225.5 462.8,232.6" fill="#404040"/>
<polygon points="459.6,225.3 462.8,232.6 456.9,231.6" fill="#4a4a4a"/>
<polygon points="465.2,225.5 468.9,225.2 470.2,232.0" fill="#4d4d4d"/>
<polygon points="465.2,225.5 470.2,232.0 462.8,232.6" fill="#4e4e4e"/>
<polygon points="468.9,225.2 476.2,228.3 470.2,232.0" fill="#535353"/>
<polygon points="476.2,228.3 477.5,230.8 470.2,232.0" fill="#636363"/>
<polygon points="476.2,228.3 482.9,225.4 477.5,230.8" fill="#9b9b9b"/>
<polygon points="482.9,225.4 482.8,229.7 477.5,230.8" fill="#8f8f8f"/>
<polygon points="482.9,225.4 487.8,224.7 491.0,232.3" fill="#a2a2a2"/>
<polygon points="482.9,225.4 491.0,232.3 482.8,229.7" fill="#c4c4c4"/>
<polygon points="380.5,230.6 387.5,233.7 388.2,236.0" fill="#181818"/>
<polygon points="387.5,233.7 393.7,230.5 390.7,236.2" fill="#121212"/>
<polygon points="387.5,233.7 390.7,236.2 388.2,236.0" fill="#141414"/>
<polygon points="393.7,230.5 400.1,234.2 390.7,236.2" fill="#141414"/>
<polygon points="400.1,234.2 396.9,238.0 390.7,236.2" fill="#0e0e0e"/>
<polygon points="400.1,234.2 405.5,230.0 396.9,238.0" fill="#1e1e1e"/>
<polygon points="405.5,230.0 405.3,236.5 396.9,238.0" fill="#272727"/>
<polygon points="405.5,230.0 412.5,233.8 413.1,237.4" fill="#282828"/>
<polygon points="405.5,230.0 413.1,237.4 405.3,236.5" fill="#272727"/>
<polygon points="412.5,233.8 416.2,230.3 415.3,236.5" fill="#313131"/>
<polygon points="412.5,233.8 415.3,236.5 413.1,237.4" fill="#252525"/>
<polygon points="416.2,230.3 421.5,232.2 415.3,236.5" fill="#262626"/>
<polygon points="421.5,232.2 424.1,240.0 415.3,236.5" fill="#373737"/>
<polygon points="421.5,232.2 430.8,232.7 424.1,240.0" fill="#303030"/>
<polygon points="430.8,232.7 427.4,235.7 424.1,240.0" fill="#333333"/>
<polygon points="430.8,232.7 437.0,230.6 427.4,235.7" fill="#2c2c2c"/>
<polygon points="437.0,230.6 436.3,236.8 427.4,235.7" fill="#313131"/>
<polygon points="437.0,230.6 440.2,233.2 443.3,238.0" fill="#2d2d2d"/>
<polygon points="437.0,230.6 443.3,238.0 436.3,236.8" fill="#2a2a2a"/>
<polygon points="440.2,233.2 447.7,231.5 443.3,238.0" fill="#262626"/>
<polygon points="447.7,231.5 447.7,237.3 443.3,238.0" fill="#252525"/>
<polygon points="447.7,231.5 453.9,231.2 447.7,237.3" fill="#373737"/>
<polygon points="453.9,231.2 454.4,237.8 447.7,237.3" fill="#3a3a3a"/>
<polygon points="453.9,231.2 456.9,231.6 458.2,239.9" fill="#3e3e3e"/>
<polygon points="453.9,231.2 458.2,239.9 454.4,237.8" fill="#434343"/>
<polygon points="456.9,231.6 462.8,232.6 463.1,239.1" fill="#454545"/>
<polygon points="456.9,231.6 463.1,239.1 458.2,239.9" fill="#464646"/>
<polygon points="462.8,232.6 470.2,232.0 463.1,239.1" fill="#474747"/>
<polygon points="470.2,232.0 468.9,238.7 463.1,239.1" fill="#474747"/>
<polygon points="470.2,232.0 477.5,230.8 476.5,239.7" fill="#5a5a5a"/>
<polygon points="470.2,232.0 476.5,239.7 468.9,238.7" fill="#4a4a4a"/>
<polygon points="477.5,230.8 482.8,229.7 480.9,238.3" fill="#8a8a8a"/>
<polygon points="477.5,230.8 480.9,238.3 476.5,239.7" fill="#929292"/>
<polygon points="482.8,229.7 491.0,232.3 488.6,240.0" fill="#b1b1b1"/>
<polygon points="482.8,229.7 488.6,240.0 480.9,238.3" fill="#9e9e9e"/>
<polygon points="491.0,232.3 497.3,229.9 488.6,240.0" fill="#b2b2b2"/>
<polygon points="388.2,236.0 390.7,236.2 391.1,246.3" fill="#131313"/>
<polygon points="388.2,236.0 391.1,246.3 386.0,241.7" fill="#121212"/>
<polygon points="390.7,236.2 396.9,238.0 391.1,246.3" fill="#121212"/>
<polygon points="396.9,238.0 396.6,246.0 391.1,246.3" fill="#121212"/>
<polygon points="396.9,238.0 405.3,236.5 396.6,246.0" fill="#191919"/>
<polygon points="405.3,236.5 403.3,245.1 396.6,246.0" fill="#191919"/>
<polygon points="405.3,236.5 413.1,237.4 409.1,242.4" fill="#232323"/>
<polygon points="405.3,236.5 409.1,242.4 403.3,245.1" fill="#212121"/>
<polygon points="413.1,237.4 415.3,236.5 409.1,242.4" fill="#292929"/>
<polygon points="415.3,236.5 417.9,242.0 409.1,242.4" fill="#242424"/>
<polygon points="415.3,236.5 424.1,240.0 422.2,246.0" fill="#252525"/>
<polygon points="415.3,236.5 422.2,246.0 417.9,242.0" fill="#2c2c2c"/>
<polygon points="424.1,240.0 427.4,235.7 430.0,245.8" fill="#282828"/>
<polygon points="424.1,240.0 430.0,245.8 422.2,246.0" fill="#2d2d2d"/>
<polygon points="427.4,235.7 436.3,236.8 430.0,245.8" fill="#242424"/>
<polygon points="436.3,236.8 437.3,241.8 430.0,245.8" fill="#2d2d2d"/>
<polygon points="436.3,236.8 443.3,238.0 437.3,241.8" fill="#242424"/>
<polygon points="443.3,238.0 439.7,245.4 437.3,241.8" fill="#1e1e1e"/>
<polygon points="443.3,238.0 447.7,237.3 447.9,241.8" fill="#1e1e1e"/>
<polygon points="443.3,238.0 447.9,241.8 439.7,245.4" fill="#181818"/>
<polygon points="447.7,237.3 454.4,237.8 453.0,242.7" fill="#363636"/>
<polygon points="447.7,237.3 453.0,242.7 447.9,241.8" fill="#242424"/>
<polygon points="454.4,237.8 458.2,239.9 453.0,242.7" fill="#383838"/>
<polygon points="458.2,239.9 458.7,242.1 453.0,242.7" fill="#383838"/>
<polygon points="458.2,239.9 463.1,239.1 462.7,246.4" fill="#393939"/>
<polygon points="458.2,239.9 462.7,246.4 458.7,242.1" fill="#3d3d3d"/>
<polygon points="463.1,239.1 468.9,238.7 470.1,245.8" fill="#3b3b3b"/>
<polygon points="463.1,239.1 470.1,245.8 462.7,246.4" fill="#333333"/>
<polygon points="468.9,238.7 476.5,239.7 475.2,243.9" fill="#565656"/>
<polygon points="468.9,238.7 475.2,243.9 470.1,245.8" fill="#585858"/>
<polygon points="476.5,239.7 480.9,238.3 475.2,243.9" fill="#696969"/>
<polygon points="480.9,238.3 481.3,243.7 475.2,243.9" fill="#717171"/>
<polygon points="480.9,238.3 488.6,240.0 487.5,244.9" fill="#acacac"/>
<polygon points="480.9,238.3 487.5,244.9 481.3,243.7" fill="#9c9c9c"/>
<polygon points="488.6,240.0 497.1,238.6 493.3,245.1" fill="#b3b3b3"/>
<polygon points="488.6,240.0 493.3,245.1 487.5,244.9" fill="#848484"/>
<polygon points="386.0,241.7 391.1,246.3 393.5,252.0" fill="#101010"/>
<polygon points="391.1,246.3 396.6,246.0 397.8,250.5" fill="#101010"/>
<polygon points="391.1,246.3 397.8,250.5 393.5,252.0" fill="#131313"/>
<polygon points="396.6,246.0 403.3,245.1 397.8,250.5" fill="#121212"/>
<polygon points="403.3,245.1 404.4,248.8 397.8,250.5" fill="#161616"/>
<polygon points="403.3,245.1 409.1,242.4 409.6,248.2" fill="#292929"/>
<polygon points="403.3,245.1 409.6,248.2 404.4,248.8" fill="#212121"/>
<polygon points="409.1,242.4 417.9,242.0 418.6,251.4" fill="#2d2d2d"/>
<polygon points="409.1,242.4 418.6,251.4 409.6,248.2" fill="#2a2a2a"/>
<polygon points="417.9,242.0 422.2,246.0 425.0,247.8" fill="#252525"/>
<polygon points="417.9,242.0 425.0,247.8 418.6,251.4" fill="#222222"/>
<polygon points="422.2,246.0 430.0,245.8 425.0,247.8" fill="#2a2a2a"/>
<polygon points="430.0,245.8 429.9,249.2 425.0,247.8" fill="#292929"/>
<polygon points="430.0,245.8 437.3,241.8 429.9,249.2" fill="#2b2b2b"/>
<polygon points="437.3,241.8 435.7,250.2 429.9,249.2" fill="#262626"/>
<polygon points="437.3,241.8 439.7,245.4 435.7,250.2" fill="#2e2e2e"/>
<polygon points="439.7,245.4 440.1,252.3 435.7,250.2" fill="#202020"/>
<polygon points="439.7,245.4 447.9,241.8 444.6,251.2" fill="#1c1c1c"/>
<polygon points="439.7,245.4 444.6,251.2 440.1,252.3" fill="#292929"/>
<polygon points="447.9,241.8 453.0,242.7 454.7,250.0" fill="#292929"/>
<polygon points="447.9,241.8 454.7,250.0 444.6,251.2" fill="#282828"/>
<polygon points="453.0,242.7 458.7,242.1 454.7,250.0" fill="#2d2d2d"/>
<polygon points="458.7,242.1 459.4,252.4 454.7,250.0" fill="#303030"/>
<polygon points="458.7,242.1 462.7,246.4 459.4,252.4" fill="#383838"/>
<polygon points="462.7,246.4 463.7,250.6 459.4,252.4" fill="#303030"/>
<polygon points="462.7,246.4 470.1,245.8 472.2,249.4" fill="#464646"/>
<polygon points="462.7,246.4 472.2,249.4 463.7,250.6" fill="#313131"/>
<polygon points="470.1,245.8 475.2,243.9 472.2,249.4" fill="#565656"/>
<polygon points="475.2,243.9 478.0,249.5 472.2,249.4" fill="#5b5b5b"/>
<polygon points="475.2,243.9 481.3,243.7 478.0,249.5" fill="#6c6c6c"/>
<polygon points="481.3,243.7 483.1,250.5 478.0,249.5" fill="#7c7c7c"/>
<polygon points="481.3,243.7 487.5,244.9 483.1,250.5" fill="#8a8a8a"/>
<polygon points="487.5,244.9 489.9,249.1 483.1,250.5" fill="#838383"/>
<polygon points="487.5,244.9 493.3,245.1 489.9,249.1" fill="#9b9b9b"/>
<polygon points="493.3,245.1 495.6,250.2 489.9,249.1" fill="#868686"/>
<polygon points="393.5,252.0 397.8,250.5 398.9,257.4" fill="#141414"/>
<polygon points="393.5,252.0 398.9,257.4 393.9,255.8" fill="#121212"/>
<polygon points="397.8,250.5 404.4,248.8 406.2,254.3" fill="#171717"/>
<polygon points="397.8,250.5 406.2,254.3 398.9,257.4" fill="#141414"/>
<polygon points="404.4,248.8 409.6,248.2 411.9,255.4" fill="#222222"/>
<polygon points="404.4,248.8 411.9,255.4 406.2,254.3" fill="#181818"/>
<polygon points="409.6,248.2 418.6,251.4 417.1,254.7" fill="#202020"/>
<polygon points="409.6,248.2 417.1,254.7 411.9,255.4" fill="#1f1f1f"/>
<polygon points="418.6,251.4 425.0,247.8 417.1,254.7" fill="#202020"/>
<polygon points="425.0,247.8 422.4,255.2 417.1,254.7" fill="#1d1d1d"/>
<polygon points="425.0,247.8 429.9,249.2 422.4,255.2" fill="#282828"/>
<polygon points="429.9,249.2 428.4,253.7 422.4,255.2" fill="#262626"/>
<polygon points="429.9,249.2 435.7,250.2 433.6,256.3" fill="#2a2a2a"/>
<polygon points="429.9,249.2 433.6,256.3 428.4,253.7" fill="#1e1e1e"/>
<polygon points="435.7,250.2 440.1,252.3 438.9,254.5" fill="#1f1f1f"/>
<polygon points="435.7,250.2 438.9,254.5 433.6,256.3" fill="#262626"/>
<polygon points="440.1,252.3 444.6,251.2 438.9,254.5" fill="#222222"/>
<polygon points="444.6,251.2 448.0,254.9 438.9,254.5" fill="#262626"/>
<polygon points="444.6,251.2 454.7,250.0 452.2,254.8" fill="#212121"/>
<polygon points="444.6,251.2 452.2,254.8 448.0,254.9" fill="#2e2e2e"/>
<polygon points="454.7,250.0 459.4,252.4 452.2,254.8" fill="#252525"/>
<polygon points="459.4,252.4 460.6,254.0 452.2,254.8" fill="#303030"/>
<polygon points="459.4,252.4 463.7,250.6 460.6,254.0" fill="#313131"/>
<polygon points="463.7,250.6 465.7,257.7 460.6,254.0" fill="#363636"/>
<polygon points="463.7,250.6 472.2,249.4 465.7,257.7" fill="#414141"/>
<polygon points="472.2,249.4 469.6,255.6 465.7,257.7" fill="#404040"/>
<polygon points="472.2,249.4 478.0,249.5 469.6,255.6" fill="#3f3f3f"/>
<polygon points="478.0,249.5 478.4,256.6 469.6,255.6" fill="#595959"/>
<polygon points="478.0,249.5 483.1,250.5 482.4,253.8" fill="#868686"/>
<polygon points="478.0,249.5 482.4,253.8 478.4,256.6" fill="#727272"/>
<polygon points="483.1,250.5 489.9,249.1 482.4,253.8" fill="#a3a3a3"/>
<polygon points="489.9,249.1 488.7,255.4 482.4,253.8" fill="#8d8d8d"/>
<polygon points="489.9,249.1 495.6,250.2 488.7,255.4" fill="#a4a4a4"/>
<polygon points="495.6,250.2 496.0,255.0 488.7,255.4" fill="#7b7b7b"/>
<polygon points="398.9,257.4 406.2,254.3 397.2,260.7" fill="#101010"/>
<polygon points="406.2,254.3 403.0,263.5 397.2,260.7" fill="#0d0d0d"/>
<polygon points="406.2,254.3 411.9,255.4 409.1,260.0" fill="#171717"/>
<polygon points="406.2,254.3 409.1,260.0 403.0,263.5" fill="#0f0f0f"/>
<polygon points="411.9,255.4 417.1,254.7 409.1,260.0" fill="#1a1a1a"/>
<polygon points="417.1,254.7 418.2,262.3 409.1,260.0" fill="#191919"/>
<polygon points="417.1,254.7 422.4,255.2 420.9,262.9" fill="#1a1a1a"/>
<polygon points="417.1,254.7 420.9,262.9 418.2,262.3" fill="#191919"/>
<polygon points="422.4,255.2 428.4,253.7 420.9,262.9" fill="#1b1b1b"/>
<polygon points="428.4,253.7 430.0,261.9 420.9,262.9" fill="#1e1e1e"/>
<polygon points="428.4,253.7 433.6,256.3 432.9,262.9" fill="#212121"/>
<polygon points="428.4,253.7 432.9,262.9 430.0,261.9" fill="#212121"/>
<polygon points="433.6,256.3 438.9,254.5 432.9,262.9" fill="#242424"/>
<polygon points="438.9,254.5 440.6,262.4 432.9,262.9" fill="#222222"/>
<polygon points="438.9,254.5 448.0,254.9 449.4,263.5" fill="#272727"/>
<polygon points="438.9,254.5 449.4,263.5 440.6,262.4" fill="#212121"/>
<polygon points="448.0,254.9 452.2,254.8 449.4,263.5" fill="#2d2d2d"/>
<polygon points="452.2,254.8 454.8,260.3 449.4,263.5" fill="#252525"/>
<polygon points="452.2,254.8 460.6,254.0 454.8,260.3" fill="#272727"/>
<polygon points="460.6,254.0 458.2,262.1 454.8,260.3" fill="#2e2e2e"/>
<polygon points="460.6,254.0 465.7,257.7 462.6,264.3" fill="#353535"/>
<polygon points="460.6,254.0 462.6,264.3 458.2,262.1" fill="#2c2c2c"/>
<polygon points="465.7,257.7 469.6,255.6 469.9,260.9" fill="#393939"/>
<polygon points="465.7,257.7 469.9,260.9 462.6,264.3" fill="#323232"/>
<polygon points="469.6,255.6 478.4,256.6 476.1,260.8" fill="#505050"/>
<polygon points="469.6,255.6 476.1,260.8 469.9,260.9" fill="#424242"/>
<polygon points="478.4,256.6 482.4,253.8 484.7,262.3" fill="#6b6b6b"/>
<polygon points="478.4,256.6 484.7,262.3 476.1,260.8" fill="#767676"/>
<polygon points="482.4,253.8 488.7,255.4 489.1,261.6" fill="#858585"/>
<polygon points="482.4,253.8 489.1,261.6 484.7,262.3" fill="#919191"/>
<polygon points="488.7,255.4 496.0,255.0 492.8,261.1" fill="#a7a7a7"/>
<polygon points="488.7,255.4 492.8,261.1 489.1,261.6" fill="#a9a9a9"/>
<polygon points="397.2,260.7 403.0,263.5 401.0,268.3" fill="#111111"/>
<polygon points="403.0,263.5 406.4,268.0 401.0,268.3" fill="#121212"/>
<polygon points="403.0,263.5 409.1,260.0 411.8,268.8" fill="#0e0e0e"/>
<polygon points="403.0,263.5 411.8,268.8 406.4,268.0" fill="#121212"/>
<polygon points="409.1,260.0 418.2,262.3 411.8,268.8" fill="#151515"/>
<polygon points="418.2,262.3 416.0,266.6 411.8,268.8" fill="#111111"/>
<polygon points="418.2,262.3 420.9,262.9 416.0,266.6" fill="#121212"/>
<polygon points="420.9,262.9 424.6,266.3 416.0,266.6" fill="#191919"/>
<polygon points="420.9,262.9 430.0,261.9 424.6,266.3" fill="#191919"/>
<polygon points="430.0,261.9 431.0,266.6 424.6,266.3" fill="#151515"/>
<polygon points="430.0,261.9 432.9,262.9 431.0,266.6" fill="#202020"/>
<polygon points="432.9,262.9 433.1,266.1 431.0,266.6" fill="#1b1b1b"/>
<polygon points="432.9,262.9 440.6,262.4 442.4,270.2" fill="#1b1b1b"/>
<polygon points="432.9,262.9 442.4,270.2 433.1,266.1" fill="#1f1f1f"/>
<polygon points="440.6,262.4 449.4,263.5 442.4,270.2" fill="#1e1e1e"/>
<polygon points="449.4,263.5 446.6,268.8 442.4,270.2" fill="#1e1e1e"/>
<polygon points="449.4,263.5 454.8,260.3 446.6,268.8" fill="#222222"/>
<polygon points="454.8,260.3 451.8,269.9 446.6,268.8" fill="#212121"/>
<polygon points="454.8,260.3 458.2,262.1 459.9,266.3" fill="#2d2d2d"/>
<polygon points="454.8,260.3 459.9,266.3 451.8,269.9" fill="#2e2e2e"/>
<polygon points="458.2,262.1 462.6,264.3 462.9,268.9" fill="#363636"/>
<polygon points="458.2,262.1 462.9,268.9 459.9,266.3" fill="#2d2d2d"/>
<polygon points="462.6,264.3 469.9,260.9 468.8,269.6" fill="#3d3d3d"/>
<polygon points="462.6,264.3 468.8,269.6 462.9,268.9" fill="#3f3f3f"/>
<polygon points="469.9,260.9 476.1,260.8 468.8,269.6" fill="#444444"/>
<polygon points="476.1,260.8 476.0,266.7 468.8,269.6" fill="#575757"/>
<polygon points="476.1,260.8 484.7,262.3 476.0,266.7" fill="#747474"/>
<polygon points="484.7,262.3 483.4,267.1 476.0,266.7" fill="#737373"/>
<polygon points="484.7,262.3 489.1,261.6 489.3,266.3" fill="#767676"/>
<polygon points="484.7,262.3 489.3,266.3 483.4,267.1" fill="#919191"/>
<polygon points="489.1,261.6 492.8,261.1 497.0,267.2" fill="#767676"/>
<polygon points="489.1,261.6 497.0,267.2 489.3,266.3" fill="#a9a9a9"/>
<polygon points="406.4,268.0 411.8,268.8 411.8,271.8" fill="#141414"/>
<polygon points="406.4,268.0 411.8,271.8 404.3,276.1" fill="#131313"/>
<polygon points="411.8,268.8 416.0,266.6 411.8,271.8" fill="#171717"/>
<polygon points="416.0,266.6 416.2,273.8 411.8,271.8" fill="#171717"/>
<polygon points="416.0,266.6 424.6,266.3 421.8,275.2" fill="#161616"/>
<polygon points="416.0,266.6 421.8,275.2 416.2,273.8" fill="#151515"/>
<polygon points="424.6,266.3 431.0,266.6 421.8,275.2" fill="#141414"/>
<polygon points="431.0,266.6 427.5,275.4 421.8,275.2" fill="#1a1a1a"/>
<polygon points="431.0,266.6 433.1,266.1 427.5,275.4" fill="#161616"/>
<polygon points="433.1,266.1 434.0,271.9 427.5,275.4" fill="#1f1f1f"/>
<polygon points="433.1,266.1 442.4,270.2 434.0,271.9" fill="#222222"/>
<polygon points="442.4,270.2 441.3,272.1 434.0,271.9" fill="#202020"/>
<polygon points="442.4,270.2 446.6,268.8 441.3,272.1" fill="#232323"/>
<polygon points="446.6,268.8 447.2,275.4 441.3,272.1" fill="#222222"/>
<polygon points="446.6,268.8 451.8,269.9 453.5,273.8" fill="#2b2b2b"/>
<polygon points="446.6,268.8 453.5,273.8 447.2,275.4" fill="#2c2c2c"/>
<polygon points="451.8,269.9 459.9,266.3 453.5,273.8" fill="#262626"/>
<polygon points="459.9,266.3 456.8,274.1 453.5,273.8" fill="#2d2d2d"/>
<polygon points="459.9,266.3 462.9,268.9 456.8,274.1" fill="#2d2d2d"/>
<polygon points="462.9,268.9 463.1,274.7 456.8,274.1" fill="#363636"/>
<polygon points="462.9,268.9 468.8,269.6 469.2,274.4" fill="#4d4d4d"/>
<polygon points="462.9,268.9 469.2,274.4 463.1,274.7" fill="#444444"/>
<polygon points="468.8,269.6 476.0,266.7 469.2,274.4" fill="#5c5c5c"/>
<polygon points="476.0,266.7 476.3,273.4 469.2,274.4" fill="#555555"/>
<polygon points="476.0,266.7 483.4,267.1 476.3,273.4" fill="#6a6a6a"/>
<polygon points="483.4,267.1 483.8,272.4 476.3,273.4" fill="#909090"/>
<polygon points="483.4,267.1 489.3,266.3 483.8,272.4" fill="#999999"/>
<polygon points="489.3,266.3 487.4,276.1 483.8,272.4" fill="#808080"/>
<polygon points="404.3,276.1 411.8,271.8 409.8,280.5" fill="#171717"/>
<polygon points="411.8,271.8 416.2,273.8 419.3,277.8" fill="#181818"/>
<polygon points="411.8,271.8 419.3,277.8 409.8,280.5" fill="#171717"/>
<polygon points="416.2,273.8 421.8,275.2 419.3,277.8" fill="#171717"/>
<polygon points="421.8,275.2 423.6,280.9 419.3,277.8" fill="#161616"/>
<polygon points="421.8,275.2 427.5,275.4 423.6,280.9" fill="#1d1d1d"/>
<polygon points="427.5,275.4 430.5,279.2 423.6,280.9" fill="#191919"/>
<polygon points="427.5,275.4 434.0,271.9 436.5,279.8" fill="#191919"/>
<polygon points="427.5,275.4 436.5,279.8 430.5,279.2" fill="#191919"/>
<polygon points="434.0,271.9 441.3,272.1 436.5,279.8" fill="#202020"/>
<polygon points="441.3,272.1 443.0,277.7 436.5,279.8" fill="#212121"/>
<polygon points="441.3,272.1 447.2,275.4 443.0,277.7" fill="#202020"/>
<polygon points="447.2,275.4 449.1,279.6 443.0,277.7" fill="#202020"/>
<polygon points="447.2,275.4 453.5,273.8 452.6,278.0" fill="#2c2c2c"/>
<polygon points="447.2,275.4 452.6,278.0 449.1,279.6" fill="#252525"/>
<polygon points="453.5,273.8 456.8,274.1 452.6,278.0" fill="#292929"/>
<polygon points="456.8,274.1 457.8,281.1 452.6,278.0" fill="#303030"/>
<polygon points="456.8,274.1 463.1,274.7 457.8,281.1" fill="#383838"/>
<polygon points="463.1,274.7 465.9,278.3 457.8,281.1" fill="#4e4e4e"/>
<polygon points="463.1,274.7 469.2,274.4 465.9,278.3" fill="#4a4a4a"/>
<polygon points="469.2,274.4 470.3,278.3 465.9,278.3" fill="#505050"/>
<polygon points="469.2,274.4 476.3,273.4 470.3,278.3" fill="#777777"/>
<polygon points="476.3,273.4 475.6,278.7 470.3,278.3" fill="#878787"/>
<polygon points="476.3,273.4 483.8,272.4 475.6,278.7" fill="#8a8a8a"/>
<polygon points="483.8,272.4 482.2,282.3 475.6,278.7" fill="#949494"/>
<polygon points="409.8,280.5 419.3,277.8 410.5,287.4" fill="#151515"/>
<polygon points="419.3,277.8 418.4,286.9 410.5,287.4" fill="#181818"/>
<polygon points="419.3,277.8 423.6,280.9 425.1,287.6" fill="#141414"/>
<polygon points="419.3,277.8 425.1,287.6 418.4,286.9" fill="#171717"/>
<polygon points="423.6,280.9 430.5,279.2 425.1,287.6" fill="#151515"/>
<polygon points="430.5,279.2 428.5,284.0 425.1,287.6" fill="#151515"/>
<polygon points="430.5,279.2 436.5,279.8 428.5,284.0" fill="#171717"/>
<polygon points="436.5,279.8 435.7,287.6 428.5,284.0" fill="#232323"/>
<polygon points="436.5,279.8 443.0,277.7 435.7,287.6" fill="#1d1d1d"/>
<polygon points="443.0,277.7 440.2,286.5 435.7,287.6" fill="#212121"/>
<polygon points="443.0,277.7 449.1,279.6 448.6,287.4" fill="#242424"/>
<polygon points="443.0,277.7 448.6,287.4 440.2,286.5" fill="#272727"/>
<polygon points="449.1,279.6 452.6,278.0 448.6,287.4" fill="#383838"/>
<polygon points="452.6,278.0 450.6,285.9 448.6,287.4" fill="#3a3a3a"/>
<polygon points="452.6,278.0 457.8,281.1 450.6,285.9" fill="#393939"/>
<polygon points="457.8,281.1 456.7,284.1 450.6,285.9" fill="#3b3b3b"/>
<polygon points="457.8,281.1 465.9,278.3 456.7,284.1" fill="#4a4a4a"/>
<polygon points="465.9,278.3 466.5,285.6 456.7,284.1" fill="#646464"/>
<polygon points="465.9,278.3 470.3,278.3 466.5,285.6" fill="#707070"/>
<polygon points="470.3,278.3 471.5,285.8 466.5,285.6" fill="#707070"/>
<polygon points="470.3,278.3 475.6,278.7 471.5,285.8" fill="#8e8e8e"/>
<polygon points="475.6,278.7 476.2,284.6 471.5,285.8" fill="#6e6e6e"/>
<polygon points="418.4,286.9 425.1,287.6 417.6,291.4" fill="#151515"/>
<polygon points="425.1,287.6 423.1,292.8 417.6,291.4" fill="#1a1a1a"/>
<polygon points="425.1,287.6 428.5,284.0 431.0,292.0" fill="#202020"/>
<polygon points="425.1,287.6 431.0,292.0 423.1,292.8" fill="#1a1a1a"/>
<polygon points="428.5,284.0 435.7,287.6 434.3,294.3" fill="#191919"/>
<polygon points="428.5,284.0 434.3,294.3 431.0,292.0" fill="#202020"/>
<polygon points="435.7,287.6 440.2,286.5 434.3,294.3" fill="#262626"/>
<polygon points="440.2,286.5 438.9,293.6 434.3,294.3" fill="#292929"/>
<polygon points="440.2,286.5 448.6,287.4 438.9,293.6" fill="#292929"/>
<polygon points="448.6,287.4 447.9,292.3 438.9,293.6" fill="#2e2e2e"/>
<polygon points="448.6,287.4 450.6,285.9 447.9,292.3" fill="#2d2d2d"/>
<polygon points="450.6,285.9 452.7,293.2 447.9,292.3" fill="#505050"/>
<polygon points="450.6,285.9 456.7,284.1 452.7,293.2" fill="#474747"/>
<polygon points="456.7,284.1 460.9,293.1 452.7,293.2" fill="#656565"/>
<polygon points="456.7,284.1 466.5,285.6 466.2,289.8" fill="#707070"/>
<polygon points="456.7,284.1 466.2,289.8 460.9,293.1" fill="#767676"/>
<polygon points="466.5,285.6 471.5,285.8 470.2,290.3" fill="#5d5d5d"/>
<polygon points="466.5,285.6 470.2,290.3 466.2,289.8" fill="#737373"/>
<polygon points="417.6,291.4 423.1,292.8 423.7,299.3" fill="#181818"/>
<polygon points="423.1,292.8 431.0,292.0 423.7,299.3" fill="#181818"/>
<polygon points="431.0,292.0 428.1,296.3 423.7,299.3" fill="#171717"/>
<polygon points="431.0,292.0 434.3,294.3 436.2,297.9" fill="#1e1e1e"/>
<polygon points="431.0,292.0 436.2,297.9 428.1,296.3" fill="#202020"/>
<polygon points="434.3,294.3 438.9,293.6 441.3,298.8" fill="#2b2b2b"/>
<polygon points="434.3,294.3 441.3,298.8 436.2,297.9" fill="#242424"/>
<polygon points="438.9,293.6 447.9,292.3 441.3,298.8" fill="#2d2d2d"/>
<polygon points="447.9,292.3 448.2,296.9 441.3,298.8" fill="#3f3f3f"/>
<polygon points="447.9,292.3 452.7,293.2 452.3,300.0" fill="#585858"/>
<polygon points="447.9,292.3 452.3,300.0 448.2,296.9" fill="#5e5e5e"/>
<polygon points="452.7,293.2 460.9,293.1 459.1,297.0" fill="#656565"/>
<polygon points="452.7,293.2 459.1,297.0 452.3,300.0" fill="#555555"/>
<polygon points="460.9,293.1 466.2,289.8 459.1,297.0" fill="#757575"/>
<polygon points="466.2,289.8 465.6,296.8 459.1,297.0" fill="#5f5f5f"/>
<polygon points="423.7,299.3 428.1,296.3 421.2,305.0" fill="#202020"/>
<polygon points="428.1,296.3 430.0,304.5 421.2,305.0" fill="#262626"/>
<polygon points="428.1,296.3 436.2,297.9 433.9,301.9" fill="#202020"/>
<polygon points="428.1,296.3 433.9,301.9 430.0,304.5" fill="#282828"/>
<polygon points="436.2,297.9 441.3,298.8 441.5,305.6" fill="#3e3e3e"/>
<polygon points="436.2,297.9 441.5,305.6 433.9,301.9" fill="#343434"/>
<polygon points="441.3,298.8 448.2,296.9 445.9,302.6" fill="#636363"/>
<polygon points="441.3,298.8 445.9,302.6 441.5,305.6" fill="#505050"/>
<polygon points="448.2,296.9 452.3,300.0 445.9,302.6" fill="#5a5a5a"/>
<polygon points="452.3,300.0 451.7,302.1 445.9,302.6" fill="#585858"/>
<polygon points="452.3,300.0 459.1,297.0 451.7,302.1" fill="#545454"/>
<polygon points="421.2,305.0 423.1,309.7 415.5,311.1" fill="#242424"/>
<polygon points="421.2,305.0 430.0,304.5 423.1,309.7" fill="#262626"/>
<polygon points="430.0,304.5 427.5,311.0 423.1,309.7" fill="#272727"/>
<polygon points="430.0,304.5 433.9,301.9 433.5,308.9" fill="#2c2c2c"/>
<polygon points="430.0,304.5 433.5,308.9 427.5,311.0" fill="#343434"/>
<polygon points="433.9,301.9 441.5,305.6 433.5,308.9" fill="#3f3f3f"/>
<polygon points="441.5,305.6 441.3,311.0 433.5,308.9" fill="#494949"/>
<polygon points="441.5,305.6 445.9,302.6 441.3,311.0" fill="#4e4e4e"/>
<polygon points="445.9,302.6 449.3,311.2 441.3,311.0" fill="#474747"/>
<polygon points="445.9,302.6 451.7,302.1 449.3,311.2" fill="#4c4c4c"/>
<polygon points="415.5,311.1 417.6,317.8 408.9,315.2" fill="#2d2d2d"/>
<polygon points="415.5,311.1 423.1,309.7 417.6,317.8" fill="#2b2b2b"/>
<polygon points="423.1,309.7 422.9,316.7 417.6,317.8" fill="#383838"/>
<polygon points="423.1,309.7 427.5,311.0 427.6,314.8" fill="#3b3b3b"/>
<polygon points="423.1,309.7 427.6,314.8 422.9,316.7" fill="#404040"/>
<polygon points="427.5,311.0 433.5,308.9 427.6,314.8" fill="#414141"/>
<polygon points="433.5,308.9 436.9,315.4 427.6,314.8" fill="#474747"/>
<polygon points="433.5,308.9 441.3,311.0 436.9,315.4" fill="#474747"/>
<polygon points="441.3,311.0 439.1,316.4 436.9,315.4" fill="#444444"/>
<polygon points="406.9,316.2 408.9,315.2 411.0,322.6" fill="#262626"/>
<polygon points="406.9,316.2 411.0,322.6 405.3,323.5" fill="#252525"/>
<polygon points="408.9,315.2 417.6,317.8 411.0,322.6" fill="#2a2a2a"/>
<polygon points="417.6,317.8 417.5,323.4 411.0,322.6" fill="#3d3d3d"/>
<polygon points="417.6,317.8 422.9,316.7 421.0,319.9" fill="#414141"/>
<polygon points="417.6,317.8 421.0,319.9 417.5,323.4" fill="#484848"/>
<polygon points="422.9,316.7 427.6,314.8 421.0,319.9" fill="#515151"/>
<polygon points="427.6,314.8 429.2,321.0 421.0,319.9" fill="#5e5e5e"/>
<polygon points="427.6,314.8 436.9,315.4 429.2,321.0" fill="#5b5b5b"/>
<polygon points="436.9,315.4 434.5,319.6 429.2,321.0" fill="#606060"/>
<polygon points="405.3,323.5 406.2,326.9 400.6,330.4" fill="#282828"/>
<polygon points="405.3,323.5 411.0,322.6 406.2,326.9" fill="#272727"/>
<polygon points="411.0,322.6 409.8,327.6 406.2,326.9" fill="#282828"/>
<polygon points="411.0,322.6 417.5,323.4 414.7,326.7" fill="#4a4a4a"/>
<polygon points="411.0,322.6 414.7,326.7 409.8,327.6" fill="#3d3d3d"/>
<polygon points="417.5,323.4 421.0,319.9 414.7,326.7" fill="#565656"/>
<polygon points="421.0,319.9 424.9,330.0 414.7,326.7" fill="#8a8a8a"/>
<polygon points="421.0,319.9 429.2,321.0 428.2,329.3" fill="#818181"/>
<polygon points="421.0,319.9 428.2,329.3 424.9,330.0" fill="#929292"/>
<polygon points="429.2,321.0 436.3,329.9 428.2,329.3" fill="#969696"/>
<polygon points="400.6,330.4 406.2,326.9 399.9,333.7" fill="#272727"/>
<polygon points="406.2,326.9 406.1,332.1 399.9,333.7" fill="#303030"/>
<polygon points="406.2,326.9 409.8,327.6 406.1,332.1" fill="#363636"/>
<polygon points="409.8,327.6 413.1,333.2 406.1,332.1" fill="#474747"/>
<polygon points="409.8,327.6 414.7,326.7 413.1,333.2" fill="#4e4e4e"/>
<polygon points="414.7,326.7 418.6,331.7 413.1,333.2" fill="#757575"/>
<polygon points="414.7,326.7 424.9,330.0 418.6,331.7" fill="#838383"/>
<polygon points="424.9,330.0 424.6,332.7 418.6,331.7" fill="#9a9a9a"/>
<polygon points="424.9,330.0 428.2,329.3 424.6,332.7" fill="#a2a2a2"/>
<polygon points="428.2,329.3 430.7,335.5 424.6,332.7" fill="#989898"/>
<polygon points="428.2,329.3 436.3,329.9 430.7,335.5" fill="#a2a2a2"/>
<polygon points="399.9,333.7 401.1,340.3 392.3,339.9" fill="#2b2b2b"/>
<polygon points="399.9,333.7 406.1,332.1 402.9,338.7" fill="#2e2e2e"/>
<polygon points="399.9,333.7 402.9,338.7 401.1,340.3" fill="#343434"/>
<polygon points="406.1,332.1 413.1,333.2 412.2,340.3" fill="#595959"/>
<polygon points="406.1,332.1 412.2,340.3 402.9,338.7" fill="#505050"/>
<polygon points="413.1,333.2 418.6,331.7 418.8,342.2" fill="#929292"/>
<polygon points="413.1,333.2 418.8,342.2 412.2,340.3" fill="#8c8c8c"/>
<polygon points="418.6,331.7 424.6,332.7 424.7,338.1" fill="#9f9f9f"/>
<polygon points="418.6,331.7 424.7,338.1 418.8,342.2" fill="#b7b7b7"/>
<polygon points="424.6,332.7 430.7,335.5 431.1,340.1" fill="#b5b5b5"/>
<polygon points="424.6,332.7 431.1,340.1 424.7,338.1" fill="#a3a3a3"/>
<polygon points="430.7,335.5 435.8,332.9 431.1,340.1" fill="#adadad"/>
<polygon points="392.3,339.9 401.1,340.3 393.6,344.6" fill="#2c2c2c"/>
<polygon points="401.1,340.3 400.6,344.6 393.6,344.6" fill="#303030"/>
<polygon points="401.1,340.3 402.9,338.7 400.6,344.6" fill="#3f3f3f"/>
<polygon points="402.9,338.7 407.4,345.8 400.6,344.6" fill="#565656"/>
<polygon points="402.9,338.7 412.2,340.3 409.7,348.2" fill="#727272"/>
<polygon points="402.9,338.7 409.7,348.2 407.4,345.8" fill="#696969"/>
<polygon points="412.2,340.3 418.8,342.2 416.1,345.6" fill="#a8a8a8"/>
<polygon points="412.2,340.3 416.1,345.6 409.7,348.2" fill="#959595"/>
<polygon points="418.8,342.2 424.7,338.1 416.1,345.6" fill="#bcbcbc"/>
<polygon points="424.7,338.1 422.2,346.8 416.1,345.6" fill="#b9b9b9"/>
<polygon points="424.7,338.1 431.1,340.1 422.2,346.8" fill="#a8a8a8"/>
<polygon points="431.1,340.1 426.7,345.4 422.2,346.8" fill="#b6b6b6"/>
<polygon points="431.1,340.1 433.8,338.4 426.7,345.4" fill="#a9a9a9"/>
<polygon points="433.8,338.4 433.4,347.6 426.7,345.4" fill="#c2c2c2"/>
<polygon points="393.6,344.6 393.1,352.9 385.7,351.4" fill="#2a2a2a"/>
<polygon points="393.6,344.6 400.6,344.6 397.0,353.2" fill="#383838"/>
<polygon points="393.6,344.6 397.0,353.2 393.1,352.9" fill="#353535"/>
<polygon points="400.6,344.6 407.4,345.8 397.0,353.2" fill="#5c5c5c"/>
<polygon points="407.4,345.8 405.6,351.9 397.0,353.2" fill="#6b6b6b"/>
<polygon points="407.4,345.8 409.7,348.2 411.8,353.4" fill="#959595"/>
<polygon points="407.4,345.8 411.8,353.4 405.6,351.9" fill="#848484"/>
<polygon points="409.7,348.2 416.1,345.6 411.8,353.4" fill="#959595"/>
<polygon points="416.1,345.6 414.6,351.9 411.8,353.4" fill="#a2a2a2"/>
<polygon points="416.1,345.6 422.2,346.8 423.9,353.0" fill="#b5b5b5"/>
<polygon points="416.1,345.6 423.9,353.0 414.6,351.9" fill="#bebebe"/>
<polygon points="422.2,346.8 426.7,345.4 423.9,353.0" fill="#c7c7c7"/>
<polygon points="426.7,345.4 429.7,350.5 423.9,353.0" fill="#b5b5b5"/>
<polygon points="426.7,345.4 433.4,347.6 437.2,353.4" fill="#b6b6b6"/>
<polygon points="426.7,345.4 437.2,353.4 429.7,350.5" fill="#c3c3c3"/>
<polygon points="385.7,351.4 393.1,352.9 385.4,358.9" fill="#252525"/>
<polygon points="393.1,352.9 390.6,356.7 385.4,358.9" fill="#2a2a2a"/>
<polygon points="393.1,352.9 397.0,353.2 390.6,356.7" fill="#3b3b3b"/>
<polygon points="397.0,353.2 397.9,359.0 390.6,356.7" fill="#4a4a4a"/>
<polygon points="397.0,353.2 405.6,351.9 397.9,359.0" fill="#626262"/>
<polygon points="405.6,351.9 407.3,355.7 397.9,359.0" fill="#909090"/>
<polygon points="405.6,351.9 411.8,353.4 407.3,355.7" fill="#909090"/>
<polygon points="411.8,353.4 409.1,360.1 407.3,355.7" fill="#949494"/>
<polygon points="411.8,353.4 414.6,351.9 409.1,360.1" fill="#8e8e8e"/>
<polygon points="414.6,351.9 419.3,356.3 409.1,360.1" fill="#9f9f9f"/>
<polygon points="414.6,351.9 423.9,353.0 422.2,358.1" fill="#b8b8b8"/>
<polygon points="414.6,351.9 422.2,358.1 419.3,356.3" fill="#aeaeae"/>
<polygon points="423.9,353.0 429.7,350.5 422.2,358.1" fill="#c2c2c2"/>
<polygon points="429.7,350.5 428.1,357.6 422.2,358.1" fill="#b5b5b5"/>
<polygon points="429.7,350.5 437.2,353.4 434.9,356.8" fill="#ababab"/>
<polygon points="429.7,350.5 434.9,356.8 428.1,357.6" fill="#c0c0c0"/>
<polygon points="385.4,358.9 390.6,356.7 388.3,365.6" fill="#2a2a2a"/>
<polygon points="390.6,356.7 394.0,366.2 388.3,365.6" fill="#3e3e3e"/>
<polygon points="390.6,356.7 397.9,359.0 394.0,366.2" fill="#555555"/>
<polygon points="397.9,359.0 400.4,363.1 394.0,366.2" fill="#707070"/>
<polygon points="397.9,359.0 407.3,355.7 404.1,365.1" fill="#8e8e8e"/>
<polygon points="397.9,359.0 404.1,365.1 400.4,363.1" fill="#838383"/>
<polygon points="407.3,355.7 409.1,360.1 404.1,365.1" fill="#9e9e9e"/>
<polygon points="409.1,360.1 408.9,364.5 404.1,365.1" fill="#9f9f9f"/>
<polygon points="409.1,360.1 419.3,356.3 415.0,361.8" fill="#a1a1a1"/>
<polygon points="409.1,360.1 415.0,361.8 408.9,364.5" fill="#a2a2a2"/>
<polygon points="419.3,356.3 422.2,358.1 423.1,362.3" fill="#b6b6b6"/>
<polygon points="419.3,356.3 423.1,362.3 415.0,361.8" fill="#b5b5b5"/>
<polygon points="422.2,358.1 428.1,357.6 423.1,362.3" fill="#b2b2b2"/>
<polygon points="428.1,357.6 431.1,365.8 423.1,362.3" fill="#a9a9a9"/>
<polygon points="428.1,357.6 434.9,356.8 431.1,365.8" fill="#adadad"/>
<polygon points="434.9,356.8 434.8,362.5 431.1,365.8" fill="#b8b8b8"/>
<polygon points="388.3,365.6 394.0,366.2 385.2,368.8" fill="#333333"/>
<polygon points="394.0,366.2 395.3,368.2 385.2,368.8" fill="#505050"/>
<polygon points="394.0,366.2 400.4,363.1 395.3,368.2" fill="#6e6e6e"/>
<polygon points="400.4,363.1 397.8,371.2 395.3,368.2" fill="#868686"/>
<polygon points="400.4,363.1 404.1,365.1 397.8,371.2" fill="#9e9e9e"/>
<polygon points="404.1,365.1 406.9,371.9 397.8,371.2" fill="#a7a7a7"/>
<polygon points="404.1,365.1 408.9,364.5 406.9,371.9" fill="#a6a6a6"/>
<polygon points="408.9,364.5 410.9,372.2 406.9,371.9" fill="#9f9f9f"/>
<polygon points="408.9,364.5 415.0,361.8 417.5,369.0" fill="#999999"/>
<polygon points="408.9,364.5 417.5,369.0 410.9,372.2" fill="#9f9f9f"/>
<polygon points="415.0,361.8 423.1,362.3 417.5,369.0" fill="#b1b1b1"/>
<polygon points="423.1,362.3 422.8,371.0 417.5,369.0" fill="#b0b0b0"/>
<polygon points="423.1,362.3 431.1,365.8 430.1,368.2" fill="#bfbfbf"/>
<polygon points="423.1,362.3 430.1,368.2 422.8,371.0" fill="#afafaf"/>
<polygon points="431.1,365.8 434.8,362.5 433.5,372.2" fill="#bebebe"/>
<polygon points="431.1,365.8 433.5,372.2 430.1,368.2" fill="#b7b7b7"/>
<polygon points="385.2,368.8 388.8,374.3 382.7,377.7" fill="#363636"/>
<polygon points="385.2,368.8 395.3,368.2 388.8,374.3" fill="#444444"/>
<polygon points="395.3,368.2 395.1,377.2 388.8,374.3" fill="#727272"/>
<polygon points="395.3,368.2 397.8,371.2 399.8,376.7" fill="#888888"/>
<polygon points="395.3,368.2 399.8,376.7 395.1,377.2" fill="#8c8c8c"/>
<polygon points="397.8,371.2 406.9,371.9 402.8,377.8" fill="#9a9a9a"/>
<polygon points="397.8,371.2 402.8,377.8 399.8,376.7" fill="#9e9e9e"/>
<polygon points="406.9,371.9 410.9,372.2 402.8,377.8" fill="#a5a5a5"/>
<polygon points="410.9,372.2 411.2,375.8 402.8,377.8" fill="#999999"/>
<polygon points="410.9,372.2 417.5,369.0 416.2,377.4" fill="#8d8d8d"/>
<polygon points="410.9,372.2 416.2,377.4 411.2,375.8" fill="#989898"/>
<polygon points="417.5,369.0 422.8,371.0 424.4,377.8" fill="#a9a9a9"/>
<polygon points="417.5,369.0 424.4,377.8 416.2,377.4" fill="#a9a9a9"/>
<polygon points="422.8,371.0 430.1,368.2 427.6,375.2" fill="#acacac"/>
<polygon points="422.8,371.0 427.6,375.2 424.4,377.8" fill="#b6b6b6"/>
<polygon points="430.1,368.2 433.5,372.2 433.8,374.1" fill="#aeaeae"/>
<polygon points="430.1,368.2 433.8,374.1 427.6,375.2" fill="#b0b0b0"/>
<polygon points="382.7,377.7 388.8,374.3 385.6,381.0" fill="#343434"/>
<polygon points="388.8,374.3 395.1,377.2 392.2,383.1" fill="#757575"/>
<polygon points="388.8,374.3 392.2,383.1 385.6,381.0" fill="#494949"/>
<polygon points="395.1,377.2 399.8,376.7 392.2,383.1" fill="#868686"/>
<polygon points="399.8,376.7 397.5,382.2 392.2,383.1" fill="#8f8f8f"/>
<polygon points="399.8,376.7 402.8,377.8 405.0,382.8" fill="#a2a2a2"/>
<polygon points="399.8,376.7 405.0,382.8 397.5,382.2" fill="#9c9c9c"/>
<polygon points="402.8,377.8 411.2,375.8 405.0,382.8" fill="#ababab"/>
<polygon points="411.2,375.8 409.3,384.2 405.0,382.8" fill="#9c9c9c"/>
<polygon points="411.2,375.8 416.2,377.4 409.3,384.2" fill="#888888"/>
<polygon points="416.2,377.4 419.4,382.3 409.3,384.2" fill="#888888"/>
<polygon points="416.2,377.4 424.4,377.8 419.4,382.3" fill="#969696"/>
<polygon points="424.4,377.8 424.4,380.5 419.4,382.3" fill="#ababab"/>
<polygon points="424.4,377.8 427.6,375.2 431.0,382.2" fill="#adadad"/>
<polygon points="424.4,377.8 431.0,382.2 424.4,380.5" fill="#a2a2a2"/>
<polygon points="427.6,375.2 433.8,374.1 431.0,382.2" fill="#afafaf"/>
<polygon points="433.8,374.1 436.2,383.8 431.0,382.2" fill="#9c9c9c"/>
<polygon points="385.6,381.0 385.4,387.6 379.8,386.6" fill="#2c2c2c"/>
<polygon points="385.6,381.0 392.2,383.1 385.4,387.6" fill="#3d3d3d"/>
<polygon points="392.2,383.1 393.6,387.1 385.4,387.6" fill="#676767"/>
<polygon points="392.2,383.1 397.5,382.2 397.4,386.6" fill="#929292"/>
<polygon points="392.2,383.1 397.4,386.6 393.6,387.1" fill="#8b8b8b"/>
<polygon points="397.5,382.2 405.0,382.8 403.0,386.5" fill="#a8a8a8"/>
<polygon points="397.5,382.2 403.0,386.5 397.4,386.6" fill="#a6a6a6"/>
<polygon points="405.0,382.8 409.3,384.2 410.1,388.0" fill="#919191"/>
<polygon points="405.0,382.8 410.1,388.0 403.0,386.5" fill="#979797"/>
<polygon points="409.3,384.2 419.4,382.3 415.5,387.9" fill="#7d7d7d"/>
<polygon points="409.3,384.2 415.5,387.9 410.1,388.0" fill="#868686"/>
<polygon points="419.4,382.3 424.4,380.5 415.5,387.9" fill="#8a8a8a"/>
<polygon points="424.4,380.5 422.7,390.3 415.5,387.9" fill="#989898"/>
<polygon points="424.4,380.5 431.0,382.2 428.9,390.1" fill="#aaaaaa"/>
<polygon points="424.4,380.5 428.9,390.1 422.7,390.3" fill="#9e9e9e"/>
<polygon points="431.0,382.2 436.2,383.8 434.9,386.6" fill="#9e9e9e"/>
<polygon points="431.0,382.2 434.9,386.6 428.9,390.1" fill="#989898"/>
<polygon points="379.8,386.6 385.4,387.6 388.4,392.9" fill="#282828"/>
<polygon points="379.8,386.6 388.4,392.9 380.5,394.5" fill="#1f1f1f"/>
<polygon points="385.4,387.6 393.6,387.1 392.4,393.5" fill="#5e5e5e"/>
<polygon points="385.4,387.6 392.4,393.5 388.4,392.9" fill="#404040"/>
<polygon points="393.6,387.1 397.4,386.6 392.4,393.5" fill="#828282"/>
<polygon points="397.4,386.6 398.3,396.0 392.4,393.5" fill="#8d8d8d"/>
<polygon points="397.4,386.6 403.0,386.5 405.2,392.9" fill="#a1a1a1"/>
<polygon points="397.4,386.6 405.2,392.9 398.3,396.0" fill="#979797"/>
<polygon points="403.0,386.5 410.1,388.0 410.2,395.5" fill="#9b9b9b"/>
<polygon points="403.0,386.5 410.2,395.5 405.2,392.9" fill="#8d8d8d"/>
<polygon points="410.1,388.0 415.5,387.9 415.4,394.9" fill="#7d7d7d"/>
<polygon points="410.1,388.0 415.4,394.9 410.2,395.5" fill="#888888"/>
<polygon points="415.5,387.9 422.7,390.3 415.4,394.9" fill="#7a7a7a"/>
<polygon points="422.7,390.3 420.7,392.5 415.4,394.9" fill="#8d8d8d"/>
<polygon points="422.7,390.3 428.9,390.1 420.7,392.5" fill="#a5a5a5"/>
<polygon points="428.9,390.1 426.9,395.5 420.7,392.5" fill="#9e9e9e"/>
<polygon points="428.9,390.1 434.9,386.6 433.3,392.7" fill="#999999"/>
<polygon points="428.9,390.1 433.3,392.7 426.9,395.5" fill="#9b9b9b"/>
<polygon points="434.9,386.6 441.4,386.3 433.3,392.7" fill="#9e9e9e"/>
<polygon points="374.9,393.2 380.5,394.5 382.8,400.5" fill="#191919"/>
<polygon points="380.5,394.5 388.4,392.9 382.8,400.5" fill="#181818"/>
<polygon points="388.4,392.9 386.2,399.5 382.8,400.5" fill="#222222"/>
<polygon points="388.4,392.9 392.4,393.5 395.1,401.7" fill="#5c5c5c"/>
<polygon points="388.4,392.9 395.1,401.7 386.2,399.5" fill="#434343"/>
<polygon points="392.4,393.5 398.3,396.0 401.0,400.3" fill="#909090"/>
<polygon points="392.4,393.5 401.0,400.3 395.1,401.7" fill="#808080"/>
<polygon points="398.3,396.0 405.2,392.9 403.3,398.4" fill="#8b8b8b"/>
<polygon points="398.3,396.0 403.3,398.4 401.0,400.3" fill="#858585"/>
<polygon points="405.2,392.9 410.2,395.5 410.4,400.9" fill="#898989"/>
<polygon points="405.2,392.9 410.4,400.9 403.3,398.4" fill="#8a8a8a"/>
<polygon points="410.2,395.5 415.4,394.9 410.4,400.9" fill="#888888"/>
<polygon points="415.4,394.9 414.6,401.4 410.4,400.9" fill="#7e7e7e"/>
<polygon points="415.4,394.9 420.7,392.5 414.6,401.4" fill="#767676"/>
<polygon points="420.7,392.5 424.4,400.1 414.6,401.4" fill="#878787"/>
<polygon points="420.7,392.5 426.9,395.5 424.4,400.1" fill="#989898"/>
<polygon points="426.9,395.5 426.6,401.4 424.4,400.1" fill="#a3a3a3"/>
<polygon points="426.9,395.5 433.3,392.7 426.6,401.4" fill="#9d9d9d"/>
<polygon points="433.3,392.7 434.6,400.8 426.6,401.4" fill="#959595"/>
<polygon points="433.3,392.7 438.9,392.9 441.3,401.1" fill="#a4a4a4"/>
<polygon points="433.3,392.7 441.3,401.1 434.6,400.8" fill="#a4a4a4"/>
<polygon points="375.4,399.8 382.8,400.5 383.1,408.4" fill="#141414"/>
<polygon points="382.8,400.5 386.2,399.5 383.1,408.4" fill="#151515"/>
<polygon points="386.2,399.5 386.6,406.3 383.1,408.4" fill="#161616"/>
<polygon points="386.2,399.5 395.1,401.7 394.5,407.2" fill="#464646"/>
<polygon points="386.2,399.5 394.5,407.2 386.6,406.3" fill="#2c2c2c"/>
<polygon points="395.1,401.7 401.0,400.3 394.5,407.2" fill="#666666"/>
<polygon points="401.0,400.3 398.8,407.7 394.5,407.2" fill="#5c5c5c"/>
<polygon points="401.0,400.3 403.3,398.4 398.8,407.7" fill="#707070"/>
<polygon points="403.3,398.4 404.5,408.2 398.8,407.7" fill="#656565"/>
<polygon points="403.3,398.4 410.4,400.9 410.9,404.2" fill="#7e7e7e"/>
<polygon points="403.3,398.4 410.9,404.2 404.5,408.2" fill="#747474"/>
<polygon points="410.4,400.9 414.6,401.4 418.2,404.3" fill="#707070"/>
<polygon points="410.4,400.9 418.2,404.3 410.9,404.2" fill="#787878"/>
<polygon points="414.6,401.4 424.4,400.1 423.9,403.9" fill="#818181"/>
<polygon points="414.6,401.4 423.9,403.9 418.2,404.3" fill="#7b7b7b"/>
<polygon points="424.4,400.1 426.6,401.4 431.3,406.2" fill="#909090"/>
<polygon points="424.4,400.1 431.3,406.2 423.9,403.9" fill="#a1a1a1"/>
<polygon points="426.6,401.4 434.6,400.8 431.3,406.2" fill="#919191"/>
<polygon points="434.6,400.8 436.2,404.2 431.3,406.2" fill="#939393"/>
<polygon points="434.6,400.8 441.7,405.4 436.2,404.2" fill="#a1a1a1"/>
<polygon points="383.1,408.4 386.6,406.3 380.9,412.0" fill="#171717"/>
<polygon points="386.6,406.3 385.9,411.4 380.9,412.0" fill="#161616"/>
<polygon points="386.6,406.3 394.5,407.2 393.3,413.3" fill="#2f2f2f"/>
<polygon points="386.6,406.3 393.3,413.3 385.9,411.4" fill="#1f1f1f"/>
<polygon points="394.5,407.2 398.8,407.7 393.3,413.3" fill="#4b4b4b"/>
<polygon points="398.8,407.7 399.4,410.4 393.3,413.3" fill="#4d4d4d"/>
<polygon points="398.8,407.7 404.5,408.2 406.9,411.4" fill="#5d5d5d"/>
<polygon points="398.8,407.7 406.9,411.4 399.4,410.4" fill="#525252"/>
<polygon points="404.5,408.2 410.9,404.2 413.2,414.3" fill="#646464"/>
<polygon points="404.5,408.2 413.2,414.3 406.9,411.4" fill="#575757"/>
<polygon points="410.9,404.2 418.2,404.3 413.2,414.3" fill="#646464"/>
<polygon points="418.2,404.3 415.3,412.4 413.2,414.3" fill="#575757"/>
<polygon points="418.2,404.3 423.9,403.9 425.2,411.4" fill="#7d7d7d"/>
<polygon points="418.2,404.3 425.2,411.4 415.3,412.4" fill="#646464"/>
<polygon points="423.9,403.9 431.3,406.2 425.2,411.4" fill="#939393"/>
<polygon points="431.3,406.2 429.2,411.1 425.2,411.4" fill="#909090"/>
<polygon points="431.3,406.2 436.2,404.2 429.2,411.1" fill="#959595"/>
<polygon points="436.2,404.2 432.7,410.6 429.2,411.1" fill="#8c8c8c"/>
<polygon points="436.2,404.2 441.7,405.4 439.2,411.0" fill="#999999"/>
<polygon points="436.2,404.2 439.2,411.0 432.7,410.6" fill="#8c8c8c"/>
<polygon points="380.9,412.0 385.9,411.4 381.9,415.9" fill="#181818"/>
<polygon points="385.9,411.4 388.6,420.3 381.9,415.9" fill="#171717"/>
<polygon points="385.9,411.4 393.3,413.3 388.6,420.3" fill="#222222"/>
<polygon points="393.3,413.3 391.1,419.2 388.6,420.3" fill="#292929"/>
<polygon points="393.3,413.3 399.4,410.4 391.1,419.2" fill="#393939"/>
<polygon points="399.4,410.4 397.9,416.3 391.1,419.2" fill="#3d3d3d"/>
<polygon points="399.4,410.4 406.9,411.4 397.9,416.3" fill="#494949"/>
<polygon points="406.9,411.4 404.3,418.8 397.9,416.3" fill="#404040"/>
<polygon points="406.9,411.4 413.2,414.3 413.2,420.4" fill="#474747"/>
<polygon points="406.9,411.4 413.2,420.4 404.3,418.8" fill="#3f3f3f"/>
<polygon points="413.2,414.3 415.3,412.4 419.4,418.6" fill="#444444"/>
<polygon points="413.2,414.3 419.4,418.6 413.2,420.4" fill="#444444"/>
<polygon points="415.3,412.4 425.2,411.4 423.7,416.4" fill="#666666"/>
<polygon points="415.3,412.4 423.7,416.4 419.4,418.6" fill="#525252"/>
<polygon points="425.2,411.4 429.2,411.1 430.1,418.2" fill="#929292"/>
<polygon points="425.2,411.4 430.1,418.2 423.7,416.4" fill="#9c9c9c"/>
<polygon points="429.2,411.1 432.7,410.6 430.1,418.2" fill="#959595"/>
<polygon points="432.7,410.6 434.3,419.9 430.1,418.2" fill="#929292"/>
<polygon points="432.7,410.6 439.2,411.0 434.3,419.9" fill="#9b9b9b"/>
<polygon points="439.2,411.0 439.8,416.3 434.3,419.9" fill="#949494"/>
<polygon points="388.6,420.3 391.1,419.2 392.2,422.1" fill="#242424"/>
<polygon points="388.6,420.3 392.2,422.1 384.9,424.0" fill="#202020"/>
<polygon points="391.1,419.2 397.9,416.3 392.2,422.1" fill="#2f2f2f"/>
<polygon points="397.9,416.3 400.2,425.0 392.2,422.1" fill="#303030"/>
<polygon points="397.9,416.3 404.3,418.8 405.1,422.4" fill="#333333"/>
<polygon points="397.9,416.3 405.1,422.4 400.2,425.0" fill="#2f2f2f"/>
<polygon points="404.3,418.8 413.2,420.4 411.8,423.7" fill="#383838"/>
<polygon points="404.3,418.8 411.8,423.7 405.1,422.4" fill="#383838"/>
<polygon points="413.2,420.4 419.4,418.6 411.8,423.7" fill="#3b3b3b"/>
<polygon points="419.4,418.6 417.8,422.0 411.8,423.7" fill="#3d3d3d"/>
<polygon points="419.4,418.6 423.7,416.4 417.8,422.0" fill="#565656"/>
<polygon points="423.7,416.4 424.9,421.6 417.8,422.0" fill="#606060"/>
<polygon points="423.7,416.4 430.1,418.2 427.7,423.5" fill="#838383"/>
<polygon points="423.7,416.4 427.7,423.5 424.9,421.6" fill="#747474"/>
<polygon points="430.1,418.2 434.3,419.9 427.7,423.5" fill="#8d8d8d"/>
<polygon points="434.3,419.9 433.6,422.0 427.7,423.5" fill="#979797"/>
<polygon points="434.3,419.9 439.8,416.3 433.6,422.0" fill="#8b8b8b"/>
<polygon points="439.8,416.3 441.9,426.4 433.6,422.0" fill="#929292"/>
<polygon points="384.9,424.0 392.2,422.1 390.6,427.8" fill="#222222"/>
<polygon points="392.2,422.1 400.2,425.0 390.6,427.8" fill="#202020"/>
<polygon points="400.2,425.0 398.3,431.8 390.6,427.8" fill="#212121"/>
<polygon points="400.2,425.0 405.1,422.4 398.3,431.8" fill="#262626"/>
<polygon points="405.1,422.4 407.4,429.1 398.3,431.8" fill="#282828"/>
<polygon points="405.1,422.4 411.8,423.7 413.0,431.4" fill="#323232"/>
<polygon points="405.1,422.4 413.0,431.4 407.4,429.1" fill="#2f2f2f"/>
<polygon points="411.8,423.7 417.8,422.0 418.8,430.4" fill="#393939"/>
<polygon points="411.8,423.7 418.8,430.4 413.0,431.4" fill="#333333"/>
<polygon points="417.8,422.0 424.9,421.6 425.3,430.7" fill="#5a5a5a"/>
<polygon points="417.8,422.0 425.3,430.7 418.8,430.4" fill="#4e4e4e"/>
<polygon points="424.9,421.6 427.7,423.5 425.3,430.7" fill="#7e7e7e"/>
<polygon points="427.7,423.5 431.1,430.3 425.3,430.7" fill="#979797"/>
<polygon points="427.7,423.5 433.6,422.0 433.5,430.1" fill="#909090"/>
<polygon points="427.7,423.5 433.5,430.1 431.1,430.3" fill="#9c9c9c"/>
<polygon points="433.6,422.0 441.9,426.4 433.5,430.1" fill="#969696"/>
<polygon points="390.6,427.8 398.3,431.8 391.9,435.9" fill="#1b1b1b"/>
<polygon points="398.3,431.8 400.0,437.9 391.9,435.9" fill="#181818"/>
<polygon points="398.3,431.8 407.4,429.1 406.7,437.8" fill="#232323"/>
<polygon points="398.3,431.8 406.7,437.8 400.0,437.9" fill="#1c1c1c"/>
<polygon points="407.4,429.1 413.0,431.4 410.7,435.6" fill="#292929"/>
<polygon points="407.4,429.1 410.7,435.6 406.7,437.8" fill="#262626"/>
<polygon points="413.0,431.4 418.8,430.4 416.1,438.3" fill="#2f2f2f"/>
<polygon points="413.0,431.4 416.1,438.3 410.7,435.6" fill="#242424"/>
<polygon points="418.8,430.4 425.3,430.7 416.1,438.3" fill="#474747"/>
<polygon points="425.3,430.7 421.5,434.4 416.1,438.3" fill="#575757"/>
<polygon points="425.3,430.7 431.1,430.3 427.9,438.0" fill="#999999"/>
<polygon points="425.3,430.7 427.9,438.0 421.5,434.4" fill="#818181"/>
<polygon points="431.1,430.3 433.5,430.1 436.7,435.2" fill="#a2a2a2"/>
<polygon points="431.1,430.3 436.7,435.2 427.9,438.0" fill="#a3a3a3"/>
<polygon points="433.5,430.1 440.9,429.2 436.7,435.2" fill="#a1a1a1"/>
<polygon points="400.0,437.9 406.7,437.8 397.7,442.6" fill="#1d1d1d"/>
<polygon points="406.7,437.8 406.3,443.6 397.7,442.6" fill="#1c1c1c"/>
<polygon points="406.7,437.8 410.7,435.6 411.2,441.5" fill="#212121"/>
<polygon points="406.7,437.8 411.2,441.5 406.3,443.6" fill="#1f1f1f"/>
<polygon points="410.7,435.6 416.1,438.3 411.2,441.5" fill="#202020"/>
<polygon points="416.1,438.3 418.4,440.1 411.2,441.5" fill="#2b2b2b"/>
<polygon points="416.1,438.3 421.5,434.4 418.4,440.1" fill="#393939"/>
<polygon points="421.5,434.4 421.8,443.2 418.4,440.1" fill="#555555"/>
<polygon points="421.5,434.4 427.9,438.0 421.8,443.2" fill="#808080"/>
<polygon points="427.9,438.0 428.7,444.4 421.8,443.2" fill="#919191"/>
<polygon points="427.9,438.0 436.7,435.2 428.7,444.4" fill="#959595"/>
<polygon points="436.7,435.2 433.0,441.8 428.7,444.4" fill="#909090"/>
<polygon points="406.3,443.6 411.2,441.5 405.5,446.4" fill="#1a1a1a"/>
<polygon points="411.2,441.5 411.0,447.1 405.5,446.4" fill="#191919"/>
<polygon points="411.2,441.5 418.4,440.1 411.0,447.1" fill="#212121"/>
<polygon points="418.4,440.1 417.2,446.2 411.0,447.1" fill="#2e2e2e"/>
<polygon points="418.4,440.1 421.8,443.2 417.2,446.2" fill="#505050"/>
<polygon points="421.8,443.2 422.9,448.6 417.2,446.2" fill="#6c6c6c"/>
<polygon points="421.8,443.2 428.7,444.4 422.9,448.6" fill="#8e8e8e"/>
<polygon points="428.7,444.4 427.2,447.1 422.9,448.6" fill="#888888"/>
<polygon points="428.7,444.4 433.0,441.8 427.2,447.1" fill="#939393"/>
<polygon points="433.0,441.8 435.9,448.2 427.2,447.1" fill="#969696"/>
<polygon points="405.5,446.4 411.0,447.1 409.5,456.2" fill="#171717"/>
<polygon points="405.5,446.4 409.5,456.2 406.4,453.8" fill="#181818"/>
<polygon points="411.0,447.1 417.2,446.2 409.5,456.2" fill="#1e1e1e"/>
<polygon points="417.2,446.2 415.9,455.2 409.5,456.2" fill="#2d2d2d"/>
<polygon points="417.2,446.2 422.9,448.6 424.6,452.8" fill="#727272"/>
<polygon points="417.2,446.2 424.6,452.8 415.9,455.2" fill="#6a6a6a"/>
<polygon points="422.9,448.6 427.2,447.1 429.9,453.5" fill="#797979"/>
<polygon points="422.9,448.6 429.9,453.5 424.6,452.8" fill="#787878"/>
<polygon points="427.2,447.1 435.9,448.2 433.7,452.6" fill="#8b8b8b"/>
<polygon points="427.2,447.1 433.7,452.6 429.9,453.5" fill="#7a7a7a"/>
<polygon points="406.4,453.8 409.5,456.2 411.0,461.6" fill="#171717"/>
<polygon points="406.4,453.8 411.0,461.6 405.2,459.7" fill="#161616"/>
<polygon points="409.5,456.2 415.9,455.2 414.7,462.1" fill="#2f2f2f"/>
<polygon points="409.5,456.2 414.7,462.1 411.0,461.6" fill="#202020"/>
<polygon points="415.9,455.2 424.6,452.8 421.6,457.8" fill="#6f6f6f"/>
<polygon points="415.9,455.2 421.6,457.8 414.7,462.1" fill="#646464"/>
<polygon points="424.6,452.8 429.9,453.5 421.6,457.8" fill="#707070"/>
<polygon points="429.9,453.5 430.3,460.3 421.6,457.8" fill="#6f6f6f"/>
<polygon points="405.2,459.7 411.0,461.6 410.4,467.8" fill="#171717"/>
<polygon points="405.2,459.7 410.4,467.8 406.8,464.0" fill="#161616"/>
<polygon points="411.0,461.6 414.7,462.1 419.3,463.7" fill="#4b4b4b"/>
<polygon points="411.0,461.6 419.3,463.7 410.4,467.8" fill="#3a3a3a"/>
<polygon points="414.7,462.1 421.6,457.8 423.6,466.6" fill="#616161"/>
<polygon points="414.7,462.1 423.6,466.6 419.3,463.7" fill="#5d5d5d"/>
<polygon points="421.6,457.8 430.3,460.3 430.6,465.9" fill="#626262"/>
<polygon points="421.6,457.8 430.6,465.9 423.6,466.6" fill="#5e5e5e"/>
<polygon points="406.8,464.0 410.4,467.8 404.1,472.4" fill="#161616"/>
<polygon points="410.4,467.8 412.0,469.9 404.1,472.4" fill="#212121"/>
<polygon points="410.4,467.8 419.3,463.7 419.0,470.1" fill="#626262"/>
<polygon points="410.4,467.8 419.0,470.1 412.0,469.9" fill="#4a4a4a"/>
<polygon points="419.3,463.7 423.6,466.6 422.0,473.0" fill="#5c5c5c"/>
<polygon points="419.3,463.7 422.0,473.0 419.0,470.1" fill="#606060"/>
<polygon points="423.6,466.6 430.6,465.9 422.0,473.0" fill="#5a5a5a"/>
<polygon points="430.6,465.9 426.7,471.4 422.0,473.0" fill="#5c5c5c"/>
<polygon points="398.7,474.0 404.1,472.4 405.6,476.5" fill="#171717"/>
<polygon points="398.7,474.0 405.6,476.5 397.4,476.8" fill="#161616"/>
<polygon points="404.1,472.4 412.0,469.9 410.8,479.0" fill="#313131"/>
<polygon points="404.1,472.4 410.8,479.0 405.6,476.5" fill="#2a2a2a"/>
<polygon points="412.0,469.9 419.0,470.1 415.1,478.8" fill="#5a5a5a"/>
<polygon points="412.0,469.9 415.1,478.8 410.8,479.0" fill="#4b4b4b"/>
<polygon points="419.0,470.1 422.0,473.0 415.1,478.8" fill="#535353"/>
<polygon points="422.0,473.0 421.1,477.9 415.1,478.8" fill="#555555"/>
<polygon points="397.4,476.8 405.6,476.5 399.4,484.0" fill="#161616"/>
<polygon points="405.6,476.5 403.8,483.0 399.4,484.0" fill="#1a1a1a"/>
<polygon points="405.6,476.5 410.8,479.0 403.8,483.0" fill="#2e2e2e"/>
<polygon points="410.8,479.0 413.3,483.4 403.8,483.0" fill="#363636"/>
<polygon points="410.8,479.0 415.1,478.8 419.3,485.9" fill="#494949"/>
<polygon points="410.8,479.0 419.3,485.9 413.3,483.4" fill="#4b4b4b"/>
<polygon points="415.1,478.8 421.1,477.9 421.2,485.7" fill="#525252"/>
<polygon points="415.1,478.8 421.2,485.7 419.3,485.9" fill="#474747"/>
<polygon points="399.4,484.0 399.0,489.5 391.7,489.1" fill="#141414"/>
<polygon points="399.4,484.0 403.8,483.0 405.7,490.0" fill="#1d1d1d"/>
<polygon points="399.4,484.0 405.7,490.0 399.0,489.5" fill="#1d1d1d"/>
<polygon points="403.8,483.0 413.3,483.4 405.7,490.0" fill="#3b3b3b"/>
<polygon points="413.3,483.4 410.2,490.5 405.7,490.0" fill="#3d3d3d"/>
<polygon points="413.3,483.4 419.3,485.9 410.2,490.5" fill="#414141"/>
<polygon points="419.3,485.9 419.4,488.6 410.2,490.5" fill="#3e3e3e"/>
<polygon points="391.7,489.1 399.0,489.5 394.4,493.7" fill="#131313"/>
<polygon points="399.0,489.5 399.7,497.4 394.4,493.7" fill="#151515"/>
<polygon points="399.0,489.5 405.7,490.0 399.7,497.4" fill="#2c2c2c"/>
<polygon points="405.7,490.0 403.7,495.4 399.7,497.4" fill="#323232"/>
<polygon points="405.7,490.0 410.2,490.5 409.7,497.0" fill="#353535"/>
<polygon points="405.7,490.0 409.7,497.0 403.7,495.4" fill="#373737"/>
<polygon points="410.2,490.5 419.4,488.6 409.7,497.0" fill="#3d3d3d"/>
<polygon points="388.8,493.9 394.4,493.7 393.9,502.8" fill="#161616"/>
<polygon points="388.8,493.9 393.9,502.8 388.9,500.8" fill="#1b1b1b"/>
<polygon points="394.4,493.7 399.7,497.4 393.9,502.8" fill="#2a2a2a"/>
<polygon points="399.7,497.4 397.2,503.3 393.9,502.8" fill="#262626"/>
<polygon points="399.7,497.4 403.7,495.4 397.2,503.3" fill="#2a2a2a"/>
<polygon points="379.2,503.7 388.9,500.8 381.1,507.0" fill="#202020"/>
<polygon points="388.9,500.8 386.7,507.8 381.1,507.0" fill="#212121"/>
<polygon points="388.9,500.8 393.9,502.8 395.0,509.9" fill="#212121"/>
<polygon points="388.9,500.8 395.0,509.9 386.7,507.8" fill="#222222"/>
<polygon points="381.1,507.0 386.7,507.8 384.9,514.3" fill="#202020"/>
<path d="M411.3 90.8 L416.6 100.3 L421.9 109.8 L428.0 122.7 L434.3 134.3 L440.7 146.0 L447.0 158.7 L453.4 171.4 L458.7 183.0 L466.0 195.6 L472.3 206.2 L477.6 216.7" fill="none" stroke="#8c8c8c" stroke-opacity="0.38" stroke-width="38" stroke-linecap="butt"/>
<path d="M411.3 90.8 L416.6 100.3 L421.9 109.8 L428.0 122.7 L434.3 134.3 L440.7 146.0 L447.0 158.7 L453.4 171.4 L458.7 183.0 L466.0 195.6 L472.3 206.2 L477.6 216.7 L481.9 227.3 L485.0 237.9 L487.1 248.5 L487.6 257.0 L486.5 262.0 L482.7 268.8" fill="none" stroke="#9a9a9a" stroke-opacity="0.45" stroke-width="20" stroke-linecap="butt"/>
<path d="M411.3 90.8 L416.6 100.3 L421.9 109.8 L428.0 122.7 L434.3 134.3 L440.7 146.0 L447.0 158.7 L453.4 171.4 L458.7 183.0 L466.0 195.6 L472.3 206.2 L477.6 216.7 L481.9 227.3 L485.0 237.9 L487.1 248.5 L487.6 257.0 L486.5 262.0 L482.7 268.8" fill="none" stroke="#c4c4c4" stroke-opacity="0.75" stroke-width="9" stroke-linecap="butt"/>
<path d="M424.7 342.3 L425.8 358.2 L426.1 370.0 L427.7 382.7 L429.3 396.5 L430.8 410.2 L430.8 420.8 L429.3 431.4 L426.1 442.0" fill="none" stroke="#b8b8b8" stroke-opacity="0.7" stroke-width="6" stroke-linecap="butt"/>
</g>
<path d="M423.7 322.8 L411.5 343.9" stroke="#000" stroke-width="1" fill="none"/>
<g fill="none" stroke="#00ffff" stroke-width="1" shape-rendering="crispEdges">
<polygon points="273.1,111.2 353.6,106.2 358.6,166.0 278.1,173.6"/>
<polygon points="275.0,112.1 356.1,105.8 361.2,166.0 281.3,172.9"/>
<polygon points="343.4,107.3 424.7,96.6 429.3,159.7 349.4,168.9"/>
<polygon points="343.8,109.3 423.5,97.4 428.6,160.7 349.6,170.2"/>
<polygon points="433.3,95.6 517.7,78.4 513.9,148.3 431.7,158.6"/>
<polygon points="435.5,96.0 515.5,79.1 511.5,147.6 433.5,157.5"/>
<polygon points="501.5,104.6 584.0,110.9 581.0,173.5 497.5,166.5"/>
<polygon points="502.0,105.5 583.5,112.0 580.5,175.0 498.0,168.5"/>
<polygon points="274.3,164.4 351.6,156.3 360.5,217.0 281.0,225.0"/>
<polygon points="274.5,166.0 353.0,157.8 361.0,218.5 281.3,227.0"/>
<polygon points="348.2,158.4 428.1,146.8 434.8,211.5 353.5,217.5"/>
<polygon points="348.6,160.0 428.1,148.3 434.5,213.0 354.0,219.0"/>
<polygon points="427.5,146.7 508.4,132.8 507.0,190.6 423.4,198.3"/>
<polygon points="427.5,148.0 508.4,134.2 507.0,192.0 423.4,200.4"/>
<polygon points="498.7,159.3 581.5,166.5 575.6,232.0 493.6,222.8"/>
<polygon points="499.0,161.0 581.0,168.0 575.6,230.0 494.0,221.0"/>
<polygon points="279.6,219.2 358.2,208.6 368.7,270.0 288.2,281.5"/>
<polygon points="279.8,221.0 358.5,210.5 369.0,272.0 288.5,283.5"/>
<polygon points="352.5,208.7 432.0,202.4 436.2,268.0 355.3,272.0"/>
<polygon points="352.7,210.5 432.3,204.0 436.5,266.0 355.5,270.0"/>
<polygon points="423.6,203.0 506.9,201.0 506.9,261.0 421.6,263.5"/>
<polygon points="424.0,205.0 506.9,203.0 506.9,263.8 422.0,265.5"/>
<polygon points="489.5,206.4 576.7,216.7 568.5,285.4 481.3,275.1"/>
<polygon points="491.0,207.5 576.7,218.5 569.0,283.5 483.0,273.0"/>
<polygon points="287.3,274.8 366.8,262.3 378.9,328.0 296.5,340.2"/>
<polygon points="287.5,276.5 367.0,264.5 378.2,326.3 297.4,338.5"/>
<polygon points="356.7,258.2 436.2,256.1 437.6,320.0 355.3,321.1"/>
<polygon points="358.5,259.0 439.0,256.5 440.0,319.8 357.5,320.5"/>
<polygon points="421.6,254.0 508.6,249.5 508.6,321.3 421.9,318.6"/>
<polygon points="421.9,255.5 508.6,251.0 508.6,320.4 421.9,317.5"/>
<polygon points="486.4,263.8 575.6,274.1 566.6,340.3 477.8,328.1"/>
<polygon points="484.5,262.8 573.0,273.0 564.4,340.1 480.2,328.5"/>
</g>
<g shape-rendering="crispEdges">
<rect x="539" y="15" width="15" height="19" fill="rgb(15,15,15)"/>
<rect x="554" y="15" width="14" height="19" fill="rgb(30,30,30)"/>
<rect x="568" y="15" width="15" height="19" fill="rgb(45,45,45)"/>
<rect x="583" y="15" width="15" height="19" fill="rgb(60,60,60)"/>
<rect x="598" y="15" width="14" height="19" fill="rgb(75,75,75)"/>
<rect x="612" y="15" width="15" height="19" fill="rgb(90,90,90)"/>
<rect x="627" y="15" width="15" height="19" fill="rgb(105,105,105)"/>
<rect x="642" y="15" width="14" height="19" fill="rgb(120,120,120)"/>
<rect x="656" y="15" width="15" height="19" fill="rgb(135,135,135)"/>
<rect x="671" y="15" width="15" height="19" fill="rgb(150,150,150)"/>
<rect x="686" y="15" width="14" height="19" fill="rgb(165,165,165)"/>
<rect x="700" y="15" width="15" height="19" fill="rgb(180,180,180)"/>
<rect x="715" y="15" width="14" height="19" fill="rgb(195,195,195)"/>
<rect x="729" y="15" width="15" height="19" fill="rgb(210,210,210)"/>
<rect x="744" y="15" width="15" height="19" fill="rgb(225,225,225)"/>
<rect x="759" y="15" width="14" height="19" fill="rgb(240,240,240)"/>
<rect x="773" y="15" width="15" height="19" fill="rgb(255,255,255)"/>
</g>
<g fill="#fff" shape-rendering="crispEdges">
<rect x="524" y="12" width="1" height="24"/>
<rect x="787" y="12" width="1" height="24"/>
<rect x="576" y="34" width="1" height="3"/>
<rect x="629" y="34" width="1" height="3"/>
<rect x="681" y="34" width="1" height="3"/>
<rect x="734" y="34" width="1" height="3"/>
<rect x="0" y="522" width="87" height="18"/>
</g><g fill="#000" shape-rendering="crispEdges">
<rect x="0" y="523" width="17" height="8"/>
<rect x="17" y="531" width="18" height="8"/>
<rect x="35" y="523" width="17" height="8"/>
<rect x="52" y="531" width="18" height="8"/>
<rect x="70" y="523" width="16" height="8"/>
</g>
</svg>
<div class="t" style="left:523.5px;top:6px"><span class="z">0</span></div>
<div class="t" style="left:780.5px;top:6px">1</div>
<div class="t" style="left:575.5px;top:41px"><span class="z">0</span>.2</div>
<div class="t" style="left:628.5px;top:41px"><span class="z">0</span>.4</div>
<div class="t" style="left:680.5px;top:41px"><span class="z">0</span>.6</div>
<div class="t" style="left:733.5px;top:41px"><span class="z">0</span>.8</div>
<div class="t" style="left:31.5px;top:514px">5 km</div>
<div class="t" style="left:93.5px;top:531px">MSI:  2<span class="z">0</span><span class="z">0</span><span class="z">0</span>-263T21:15:<span class="z">0</span><span class="z">0</span>.<span class="z">0</span><span class="z">0</span> to 2<span class="z">0</span><span class="z">0</span><span class="z">0</span>-263T21:3<span class="z">0</span>:32.<span class="z">0</span><span class="z">0</span> (6/<span class="z">0</span>1448<span class="z">0</span>8332 to 6/<span class="z">0</span>1448<span class="z">0</span>9264)</div>
<div class="t" style="left:6.5px;top:555px">MSI_RegGlobal_263</div>
<div class="t" style="left:6.5px;top:569px">4x4 Mosaic of region on asteriod</div>
<div class="t" style="left:6.5px;top:583px">Double Repeat 18, 14 (Filter 4, cleaned)</div>
<div class="t" style="left:6.5px;top:597px">Duration: 25 Minutes</div>
</body></html>
